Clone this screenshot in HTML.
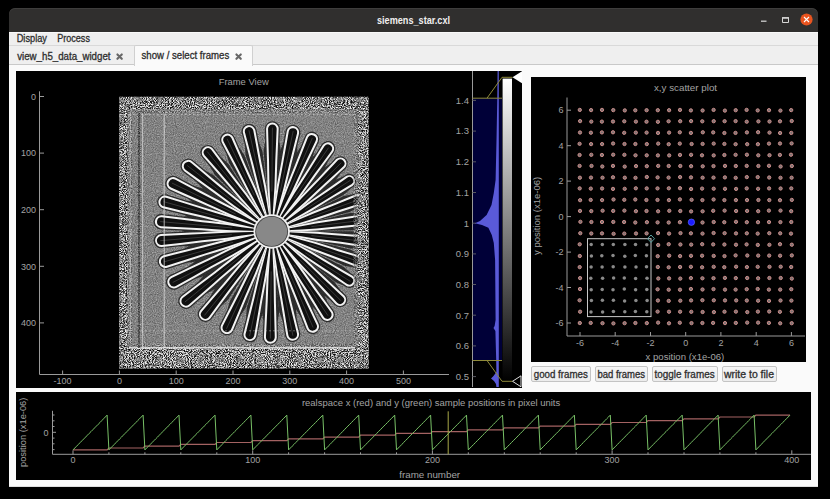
<!DOCTYPE html>
<html><head><meta charset="utf-8"><style>
html,body{margin:0;padding:0}
body{width:830px;height:499px;background:#000;position:relative;overflow:hidden;font-family:"Liberation Sans",sans-serif}
.a{position:absolute;white-space:nowrap}
#win{position:absolute;left:9px;top:8px;width:809px;height:479px;background:#302f2e;border-radius:6px 6px 0 0;overflow:hidden}
#title{position:absolute;left:0;top:0;width:809px;height:24px;background:#302f2e;border-radius:6px 6px 0 0;box-shadow:inset 0 1px 0 #3e3d3c}
#menu{position:absolute;left:0;top:24px;width:809px;height:14px;background:#efefef;box-shadow:inset 0 1px 0 #f9f9f9}
#tabbar{position:absolute;left:0;top:37px;width:809px;height:18px;background:#efefef;border-top:1px solid #d9d9d9;border-bottom:1px solid #c9c9c9}
.btn{position:absolute;top:366px;height:14px;border:1px solid #c4c4c4;border-radius:2px;background:linear-gradient(#f6f6f6,#ececec);font-size:9.6px;color:#303030;line-height:14px;text-align:center}
</style></head><body>
<div id="win">
<div id="title"></div><div style="position:absolute;left:0;top:24px;width:809px;height:454px;background:#fafafa;border-bottom:1px solid #dedede"></div>
<div id="menu"></div>
<div id="tabbar"></div>
</div>

<svg class="a" style="left:750px;top:8px" width="68" height="24"><path d="M11 13.2H16.5" stroke="#cfcfcf" stroke-width="1.3"/><path d="M32.5 10H38.5V14.5H32.5Z" fill="none" stroke="#d6d6d6" stroke-width="1"/><path d="M32 9.8H39" stroke="#d6d6d6" stroke-width="1.4"/><circle cx="56.5" cy="11.5" r="6.1" fill="#e9541f"/><path d="M54 9L59 14M59 9L54 14" stroke="#fff" stroke-width="1.1"/></svg>
<div class="a" style="left:134px;top:45px;width:117px;height:20px;background:#fafafa;border:1px solid #d0d0d0;border-bottom:none;border-radius:2px 2px 0 0"></div>
<svg class="a" style="left:114px;top:51px" width="12" height="12"><path d="M3.4 3.4L7.8 7.8M7.8 3.4L3.4 7.8" stroke="#686868" stroke-width="2.1" stroke-linecap="round"/></svg>
<svg class="a" style="left:232.5px;top:50.5px" width="12" height="12"><path d="M3.4 3.4L7.8 7.8M7.8 3.4L3.4 7.8" stroke="#686868" stroke-width="2.1" stroke-linecap="round"/></svg>
<div class="btn" style="left:531.0px;width:57.5px"></div>
<div class="btn" style="left:594.5px;width:51.0px"></div>
<div class="btn" style="left:652.0px;width:63.5px"></div>
<div class="btn" style="left:721.5px;width:53.0px"></div>
<svg class="a" style="left:0;top:0" width="830" height="499" font-family="Liberation Sans, sans-serif">
<text x="377.00" y="23.60" font-size="11.00" fill="#f0f0f0" textLength="73.00" lengthAdjust="spacingAndGlyphs" font-weight="bold">siemens_star.cxl</text>
<text x="16.70" y="41.50" font-size="10.00" fill="#2e2e2e" textLength="30.30" lengthAdjust="spacingAndGlyphs" stroke="#2e2e2e" stroke-width="0.3">Display</text>
<text x="57.30" y="41.50" font-size="10.00" fill="#2e2e2e" textLength="32.60" lengthAdjust="spacingAndGlyphs" stroke="#2e2e2e" stroke-width="0.3">Process</text>
<text x="17.20" y="59.60" font-size="10.00" fill="#2e2e2e" textLength="93.30" lengthAdjust="spacingAndGlyphs" stroke="#2e2e2e" stroke-width="0.3">view_h5_data_widget</text>
<text x="141.50" y="59.40" font-size="10.00" fill="#2e2e2e" textLength="87.70" lengthAdjust="spacingAndGlyphs" stroke="#2e2e2e" stroke-width="0.3">show / select frames</text>
<text x="533.80" y="377.60" font-size="10.00" fill="#2e2e2e" textLength="54.00" lengthAdjust="spacingAndGlyphs" stroke="#2e2e2e" stroke-width="0.3">good frames</text>
<text x="597.40" y="377.60" font-size="10.00" fill="#2e2e2e" textLength="47.60" lengthAdjust="spacingAndGlyphs" stroke="#2e2e2e" stroke-width="0.3">bad frames</text>
<text x="654.60" y="377.60" font-size="10.00" fill="#2e2e2e" textLength="60.00" lengthAdjust="spacingAndGlyphs" stroke="#2e2e2e" stroke-width="0.3">toggle frames</text>
<text x="724.00" y="377.60" font-size="10.00" fill="#2e2e2e" textLength="50.00" lengthAdjust="spacingAndGlyphs" stroke="#2e2e2e" stroke-width="0.3">write to file</text>
<rect x="16" y="71" width="506" height="317" fill="#000"/>
<text x="218.70" y="85.20" font-size="9.30" fill="#a3a3a3" textLength="50.00" lengthAdjust="spacingAndGlyphs">Frame View</text>
<path d="M39.5 91.3V374.5H449" stroke="#9a9a9a" fill="none" stroke-width="1"/>
<path d="M39.5 96.5H44" stroke="#9a9a9a"/>
<text x="36" y="99.7" font-size="9" fill="#a3a3a3" text-anchor="end">0</text>
<path d="M39.5 153.1H44" stroke="#9a9a9a"/>
<text x="36" y="156.3" font-size="9" fill="#a3a3a3" text-anchor="end">100</text>
<path d="M39.5 209.7H44" stroke="#9a9a9a"/>
<text x="36" y="212.9" font-size="9" fill="#a3a3a3" text-anchor="end">200</text>
<path d="M39.5 266.3H44" stroke="#9a9a9a"/>
<text x="36" y="269.5" font-size="9" fill="#a3a3a3" text-anchor="end">300</text>
<path d="M39.5 322.9H44" stroke="#9a9a9a"/>
<text x="36" y="326.1" font-size="9" fill="#a3a3a3" text-anchor="end">400</text>
<path d="M62.6 374.5V370.5" stroke="#9a9a9a"/>
<text x="62.6" y="384" font-size="9" fill="#a3a3a3" text-anchor="middle">-100</text>
<path d="M119.4 374.5V370.5" stroke="#9a9a9a"/>
<text x="119.4" y="384" font-size="9" fill="#a3a3a3" text-anchor="middle">0</text>
<path d="M176.2 374.5V370.5" stroke="#9a9a9a"/>
<text x="176.2" y="384" font-size="9" fill="#a3a3a3" text-anchor="middle">100</text>
<path d="M233.0 374.5V370.5" stroke="#9a9a9a"/>
<text x="233.0" y="384" font-size="9" fill="#a3a3a3" text-anchor="middle">200</text>
<path d="M289.8 374.5V370.5" stroke="#9a9a9a"/>
<text x="289.8" y="384" font-size="9" fill="#a3a3a3" text-anchor="middle">300</text>
<path d="M346.6 374.5V370.5" stroke="#9a9a9a"/>
<text x="346.6" y="384" font-size="9" fill="#a3a3a3" text-anchor="middle">400</text>
<path d="M403.4 374.5V370.5" stroke="#9a9a9a"/>
<text x="403.4" y="384" font-size="9" fill="#a3a3a3" text-anchor="middle">500</text>
<defs><clipPath id="imc"><rect x="119.2" y="96.7" width="249.4" height="271.8"/></clipPath>
<filter id="nz" x="0" y="0" width="830" height="499" filterUnits="userSpaceOnUse" color-interpolation-filters="sRGB"><feTurbulence type="fractalNoise" baseFrequency="0.95" numOctaves="3" seed="11"/><feComponentTransfer><feFuncR type="linear" slope="3.6" intercept="-1.3"/><feFuncG type="linear" slope="3.6" intercept="-1.3"/><feFuncB type="linear" slope="3.6" intercept="-1.3"/><feFuncA type="linear" slope="0" intercept="1"/></feComponentTransfer><feColorMatrix type="saturate" values="0"/><feGaussianBlur stdDeviation="0.3"/><feComposite in2="SourceGraphic" operator="in"/></filter>
<filter id="nz2" x="0" y="0" width="830" height="499" filterUnits="userSpaceOnUse" color-interpolation-filters="sRGB"><feTurbulence type="fractalNoise" baseFrequency="0.9" numOctaves="2" seed="9"/><feComponentTransfer><feFuncR type="linear" slope="0.6" intercept="0.21"/><feFuncG type="linear" slope="0.6" intercept="0.21"/><feFuncB type="linear" slope="0.6" intercept="0.21"/><feFuncA type="linear" slope="0" intercept="1"/></feComponentTransfer><feColorMatrix type="saturate" values="0"/><feComposite in2="SourceGraphic" operator="in"/></filter></defs>
<g clip-path="url(#imc)">
<rect x="119.2" y="96.7" width="249.4" height="271.8" fill="#fff" filter="url(#nz2)"/>
<g opacity="0.85"><path d="M273.58 216.46 L274.13 211.47 L275.25 201.47 L276.93 186.49 L278.60 171.50 L279.72 161.50 L280.84 151.51 L279.42 141.50 L279.97 128.85 A7.60 7.60 0 0 0 264.77 128.75 L264.77 128.75 L265.15 141.40 L263.58 151.39 L264.56 161.40 L265.54 171.41 L267.00 186.42 L268.47 201.43 L269.45 211.43 L269.93 216.44Z" fill="#1e1e1e"/><path d="M276.58 217.17 L278.14 212.39 L281.26 202.83 L285.94 188.49 L290.62 174.16 L293.74 164.60 L296.87 155.04 L297.51 144.95 L300.31 133.89 A7.56 7.56 0 0 0 285.53 130.72 L285.53 130.72 L283.55 141.96 L279.99 151.42 L278.92 161.42 L277.85 171.41 L276.24 186.41 L274.63 201.41 L273.55 211.40 L273.02 216.40Z" fill="#1e1e1e"/><path d="M279.31 218.42 L281.78 214.05 L286.73 205.30 L294.16 192.17 L301.59 179.04 L306.54 170.29 L311.49 161.54 L314.11 151.78 L318.73 142.16 A7.53 7.53 0 0 0 304.92 136.15 L304.92 136.15 L301.02 146.08 L295.67 154.65 L292.64 164.24 L289.61 173.83 L285.06 188.21 L280.51 202.59 L277.48 212.18 L275.97 216.97Z" fill="#1e1e1e"/><path d="M281.58 220.06 L284.83 216.22 L291.31 208.54 L301.04 197.01 L310.77 185.49 L317.25 177.80 L323.74 170.12 L328.12 161.01 L334.15 152.80 A7.51 7.51 0 0 0 321.73 144.35 L321.73 144.35 L316.31 152.99 L309.46 160.42 L304.71 169.28 L299.96 178.15 L292.83 191.44 L285.70 204.73 L280.95 213.59 L278.57 218.02Z" fill="#1e1e1e"/><path d="M283.60 222.21 L287.53 219.07 L295.38 212.78 L307.16 203.36 L318.93 193.94 L326.78 187.66 L334.64 181.38 L340.70 173.29 L345.70 168.71 A7.39 7.39 0 0 0 335.32 158.20 L335.32 158.20 L330.67 163.13 L322.51 169.10 L316.13 176.87 L309.75 184.64 L300.18 196.30 L290.61 207.96 L284.23 215.73 L281.04 219.61Z" fill="#1e1e1e"/><path d="M285.22 224.80 L289.70 222.52 L298.65 217.94 L312.08 211.09 L325.52 204.23 L334.47 199.66 L343.43 195.08 L351.00 188.38 L353.22 187.05 A7.23 7.23 0 0 0 345.34 174.93 L345.34 174.93 L343.22 176.42 L334.02 180.62 L326.21 186.94 L318.40 193.27 L306.67 202.76 L294.95 212.26 L287.14 218.58 L283.23 221.75Z" fill="#1e1e1e"/><path d="M286.36 228.02 L291.24 226.79 L300.99 224.35 L315.62 220.68 L330.25 217.01 L340.00 214.56 L349.76 212.11 L358.64 207.28 L360.82 206.58 A7.22 7.22 0 0 0 355.86 193.01 L355.86 193.01 L353.74 193.88 L343.84 195.91 L334.80 200.32 L325.77 204.73 L312.22 211.35 L298.67 217.97 L289.63 222.39 L285.12 224.59Z" fill="#1e1e1e"/><path d="M286.76 231.42 L291.79 231.33 L301.84 231.15 L316.92 230.88 L332.00 230.60 L342.05 230.42 L352.10 230.24 L361.85 227.53 L364.40 227.31 A7.23 7.23 0 0 0 362.63 212.96 L362.63 212.96 L360.10 213.37 L350.00 213.11 L340.20 215.37 L330.40 217.63 L315.71 221.03 L301.01 224.42 L291.21 226.68 L286.32 227.81Z" fill="#1e1e1e"/><path d="M286.38 234.83 L291.29 235.88 L301.13 237.97 L315.88 241.10 L330.63 244.24 L340.47 246.33 L350.30 248.42 L360.41 247.99 L363.65 248.45 A7.26 7.26 0 0 0 365.17 234.01 L365.17 234.01 L361.90 233.79 L352.11 231.26 L342.06 231.25 L332.00 231.25 L316.92 231.23 L301.84 231.22 L291.79 231.22 L286.76 231.21Z" fill="#1e1e1e"/><path d="M285.23 238.07 L289.79 240.20 L298.90 244.45 L312.56 250.84 L326.23 257.22 L335.34 261.47 L344.45 265.73 L354.39 267.59 L358.51 269.18 A7.30 7.30 0 0 0 363.28 255.38 L363.28 255.38 L359.05 254.09 L350.08 249.42 L340.29 247.14 L330.49 244.87 L315.80 241.45 L301.11 238.04 L291.32 235.77 L286.42 234.63Z" fill="#1e1e1e"/><path d="M283.34 241.02 L287.28 244.14 L295.16 250.39 L306.99 259.75 L318.81 269.11 L326.70 275.35 L334.58 281.59 L343.82 285.69 L345.49 286.84 A7.21 7.21 0 0 0 353.22 274.66 L353.22 274.66 L351.47 273.64 L343.82 267.02 L334.82 262.55 L325.81 258.08 L312.31 251.37 L298.80 244.66 L289.79 240.19 L285.29 237.95Z" fill="#1e1e1e"/><path d="M280.97 243.34 L284.13 247.25 L290.46 255.06 L299.96 266.78 L309.46 278.50 L315.79 286.31 L322.12 294.12 L330.24 300.14 L334.81 305.05 A7.38 7.38 0 0 0 345.25 294.61 L345.25 294.61 L340.34 290.04 L334.32 281.92 L326.51 275.59 L318.70 269.26 L306.98 259.76 L295.26 250.26 L287.45 243.93 L283.54 240.77Z" fill="#1e1e1e"/><path d="M278.48 244.93 L280.82 249.38 L285.52 258.27 L292.55 271.61 L299.59 284.95 L304.28 293.84 L308.97 302.74 L315.77 310.22 L321.12 318.89 A7.51 7.51 0 0 0 333.61 310.53 L333.61 310.53 L327.63 302.28 L323.31 293.14 L316.88 285.41 L310.45 277.68 L300.80 266.09 L291.15 254.50 L284.72 246.77 L281.51 242.90Z" fill="#1e1e1e"/><path d="M275.92 245.94 L277.42 250.74 L280.42 260.34 L284.92 274.73 L289.42 289.13 L292.42 298.73 L295.42 308.32 L300.75 316.91 L305.63 329.47 A7.63 7.63 0 0 0 319.64 323.42 L319.64 323.42 L313.86 311.26 L311.26 301.49 L306.34 292.72 L301.42 283.95 L294.03 270.80 L286.65 257.65 L281.73 248.88 L279.26 244.50Z" fill="#1e1e1e"/><path d="M272.86 246.51 L273.35 251.52 L274.32 261.52 L275.78 276.53 L277.24 291.55 L278.21 301.55 L279.18 311.56 L282.64 321.06 L285.12 336.02 A7.70 7.70 0 0 0 300.20 332.95 L300.20 332.95 L296.63 318.21 L296.09 308.11 L293.06 298.52 L290.04 288.93 L285.50 274.55 L280.97 260.17 L277.94 250.58 L276.43 245.78Z" fill="#1e1e1e"/><path d="M269.65 246.43 L269.06 251.42 L267.89 261.41 L266.14 276.39 L264.38 291.37 L263.21 301.35 L262.04 311.34 L263.41 321.36 L262.63 337.21 A7.72 7.72 0 0 0 278.07 337.40 L278.07 337.40 L277.68 321.53 L279.30 311.55 L278.37 301.54 L277.45 291.53 L276.06 276.51 L274.67 261.49 L273.75 251.48 L273.29 246.47Z" fill="#1e1e1e"/><path d="M266.78 245.75 L265.23 250.54 L262.15 260.11 L257.52 274.46 L252.89 288.82 L249.81 298.39 L246.72 307.95 L246.12 318.05 L242.32 333.30 A7.72 7.72 0 0 0 257.42 336.48 L257.42 336.48 L260.09 320.99 L263.61 311.51 L264.64 301.51 L265.68 291.51 L267.23 276.51 L268.79 261.50 L269.82 251.50 L270.34 246.50Z" fill="#1e1e1e"/><path d="M263.68 244.29 L261.10 248.60 L255.94 257.23 L248.20 270.18 L240.46 283.12 L235.30 291.75 L230.14 300.38 L227.28 310.08 L219.96 324.44 A7.73 7.73 0 0 0 233.98 330.95 L233.98 330.95 L240.22 316.09 L245.79 307.64 L249.05 298.13 L252.31 288.62 L257.20 274.36 L262.09 260.09 L265.35 250.58 L266.99 245.82Z" fill="#1e1e1e"/><path d="M260.85 242.02 L257.32 245.60 L250.25 252.75 L239.65 263.48 L229.05 274.21 L221.98 281.36 L214.92 288.51 L209.83 297.25 L199.19 309.59 A7.74 7.74 0 0 0 211.26 319.26 L211.26 319.26 L220.97 306.17 L228.39 299.29 L233.82 290.83 L239.25 282.37 L247.40 269.68 L255.55 256.99 L260.98 248.53 L263.70 244.30Z" fill="#1e1e1e"/><path d="M258.87 239.50 L254.66 242.25 L246.24 247.75 L233.61 256.00 L220.98 264.25 L212.57 269.75 L204.15 275.25 L197.33 282.71 L180.94 295.20 A7.80 7.80 0 0 0 190.78 307.30 L190.78 307.30 L206.34 293.79 L215.04 288.63 L222.13 281.51 L229.23 274.38 L239.88 263.70 L250.52 253.01 L257.62 245.89 L261.16 242.33Z" fill="#1e1e1e"/><path d="M257.49 236.71 L252.80 238.54 L243.43 242.19 L229.38 247.67 L215.33 253.16 L205.97 256.81 L196.60 260.47 L188.40 266.38 L170.16 275.04 A7.80 7.80 0 0 0 177.31 288.91 L177.31 288.91 L194.94 279.06 L204.51 275.80 L212.92 270.28 L221.33 264.77 L233.94 256.49 L246.55 248.22 L254.95 242.70 L259.15 239.95Z" fill="#1e1e1e"/><path d="M256.72 233.77 L251.77 234.63 L241.86 236.34 L226.99 238.90 L212.13 241.46 L202.22 243.17 L192.31 244.88 L183.10 249.03 L163.22 253.95 A7.80 7.80 0 0 0 167.46 268.97 L167.46 268.97 L186.97 262.77 L197.00 261.49 L206.34 257.76 L215.68 254.04 L229.69 248.45 L243.70 242.86 L253.04 239.14 L257.71 237.28Z" fill="#1e1e1e"/><path d="M256.55 230.87 L251.52 230.76 L241.47 230.54 L226.39 230.21 L211.32 229.88 L201.26 229.66 L191.21 229.43 L181.37 231.74 L160.74 232.78 A7.80 7.80 0 0 0 162.03 248.33 L162.03 248.33 L182.54 245.97 L192.63 246.63 L202.51 244.76 L212.39 242.90 L227.21 240.10 L242.03 237.30 L251.91 235.43 L256.85 234.50Z" fill="#1e1e1e"/><path d="M256.87 228.31 L251.94 227.35 L242.07 225.42 L227.26 222.53 L212.46 219.64 L202.59 217.72 L192.72 215.79 L182.63 216.39 L162.07 213.90 A7.80 7.80 0 0 0 160.69 229.44 L160.69 229.44 L181.37 230.61 L191.20 232.98 L201.25 232.82 L211.31 232.66 L226.39 232.42 L241.47 232.18 L251.52 232.02 L256.55 231.94Z" fill="#1e1e1e"/><path d="M257.67 225.71 L252.99 223.88 L243.63 220.21 L229.59 214.71 L215.54 209.21 L206.18 205.54 L196.82 201.88 L186.78 200.66 L166.92 194.50 A7.80 7.80 0 0 0 162.78 209.54 L162.78 209.54 L182.99 214.42 L192.23 218.51 L202.15 220.16 L212.07 221.81 L226.95 224.28 L241.83 226.75 L251.75 228.40 L256.71 229.22Z" fill="#1e1e1e"/><path d="M258.95 223.26 L254.68 220.60 L246.15 215.29 L233.34 207.33 L220.53 199.36 L211.99 194.05 L203.45 188.74 L193.81 185.72 L176.39 176.52 A7.80 7.80 0 0 0 169.57 190.55 L169.57 190.55 L187.57 198.56 L195.92 204.27 L205.37 207.69 L214.82 211.12 L229.00 216.26 L243.18 221.40 L252.63 224.82 L257.36 226.54Z" fill="#1e1e1e"/><path d="M260.95 220.78 L257.33 217.29 L250.09 210.31 L239.24 199.84 L228.38 189.37 L221.15 182.39 L213.91 175.41 L205.11 170.43 L192.96 160.20 A7.72 7.72 0 0 0 183.46 172.37 L183.46 172.37 L196.33 181.68 L203.29 189.01 L211.82 194.34 L220.34 199.67 L233.13 207.66 L245.92 215.66 L254.44 220.99 L258.71 223.65Z" fill="#1e1e1e"/><path d="M263.65 218.63 L260.92 214.41 L255.45 205.97 L247.26 193.31 L239.06 180.65 L233.60 172.21 L228.14 163.77 L220.70 156.92 L213.82 147.72 A7.56 7.56 0 0 0 202.05 157.22 L202.05 157.22 L209.59 165.88 L214.71 174.60 L221.80 181.73 L228.89 188.85 L239.53 199.54 L250.17 210.23 L257.27 217.36 L260.81 220.92Z" fill="#1e1e1e"/><path d="M266.78 217.14 L265.09 212.41 L261.69 202.95 L256.60 188.75 L251.51 174.55 L248.12 165.09 L244.72 155.63 L239.04 147.26 L234.34 136.50 A7.57 7.57 0 0 0 220.70 143.07 L220.70 143.07 L226.18 153.45 L229.18 163.11 L234.46 171.67 L239.74 180.22 L247.66 193.06 L255.58 205.89 L260.86 214.45 L263.50 218.72Z" fill="#1e1e1e"/><path d="M270.13 216.42 L269.54 211.42 L268.37 201.44 L266.61 186.46 L264.84 171.48 L263.67 161.49 L262.49 151.51 L258.84 142.08 L256.54 129.73 A7.60 7.60 0 0 0 241.71 133.07 L241.71 133.07 L244.92 145.22 L245.66 155.30 L248.88 164.82 L252.10 174.35 L256.92 188.64 L261.75 202.93 L264.97 212.45 L266.58 217.22Z" fill="#1e1e1e"/></g>
<g><path d="M273.58 216.46 L274.13 211.47 L275.25 201.47 L276.47 186.48 L276.93 171.49 L277.24 161.49 L277.68 151.49 L278.12 141.49 L278.67 128.84 A6.30 6.30 0 0 0 266.07 128.76 L266.07 128.76 L266.45 141.41 L266.74 151.41 L267.04 161.42 L267.21 171.42 L267.47 186.42 L268.47 201.43 L269.45 211.43 L269.93 216.44Z" fill="#f2f2f2"/><path d="M276.58 217.17 L278.14 212.39 L281.26 202.83 L285.49 188.39 L288.99 173.80 L291.32 164.08 L293.78 154.38 L296.23 144.68 L299.04 133.62 A6.26 6.26 0 0 0 286.80 130.99 L286.80 130.99 L284.82 142.23 L283.08 152.08 L281.35 161.94 L279.48 171.77 L276.69 186.51 L274.63 201.41 L273.55 211.40 L273.02 216.40Z" fill="#f2f2f2"/><path d="M279.31 218.42 L281.78 214.05 L286.73 205.30 L293.74 191.98 L300.05 178.37 L304.26 169.30 L308.59 160.28 L312.92 151.26 L317.54 141.64 A6.23 6.23 0 0 0 306.11 136.66 L306.11 136.66 L302.22 146.60 L298.56 155.91 L294.91 165.23 L291.14 174.50 L285.48 188.39 L280.51 202.59 L277.48 212.18 L275.97 216.97Z" fill="#f2f2f2"/><path d="M281.58 220.06 L284.83 216.22 L291.31 208.54 L300.66 196.75 L309.38 184.55 L315.20 176.41 L321.12 168.34 L327.05 160.28 L333.08 152.06 A6.21 6.21 0 0 0 322.80 145.08 L322.80 145.08 L317.39 153.72 L312.08 162.20 L306.76 170.68 L301.34 179.09 L293.21 191.70 L285.70 204.73 L280.95 213.59 L278.57 218.02Z" fill="#f2f2f2"/><path d="M283.60 222.21 L287.53 219.07 L295.38 212.78 L306.83 203.03 L317.76 192.75 L325.04 185.89 L332.42 179.13 L339.79 172.37 L344.79 167.78 A6.09 6.09 0 0 0 336.23 159.12 L336.23 159.12 L331.59 164.06 L324.73 171.35 L317.87 178.64 L310.93 185.83 L300.51 196.63 L290.61 207.96 L284.23 215.73 L281.04 219.61Z" fill="#f2f2f2"/><path d="M285.22 224.80 L289.70 222.52 L298.65 217.94 L311.83 210.70 L324.60 202.82 L333.12 197.58 L341.70 192.43 L350.29 187.29 L352.51 185.96 A5.93 5.93 0 0 0 346.05 176.02 L346.05 176.02 L343.93 177.51 L335.74 183.26 L327.56 189.02 L319.31 194.67 L306.93 203.15 L294.95 212.26 L287.14 218.58 L283.23 221.75Z" fill="#f2f2f2"/><path d="M286.36 228.02 L291.24 226.79 L300.99 224.35 L315.46 220.24 L329.68 215.43 L339.15 212.23 L348.67 209.15 L358.19 206.06 L360.37 205.36 A5.92 5.92 0 0 0 356.31 194.23 L356.31 194.23 L354.19 195.10 L344.92 198.87 L335.65 202.65 L326.34 206.30 L312.38 211.79 L298.67 217.97 L289.63 222.39 L285.12 224.59Z" fill="#f2f2f2"/><path d="M286.76 231.42 L291.79 231.33 L301.84 231.15 L316.86 230.42 L331.79 228.94 L341.75 227.96 L351.72 227.10 L361.69 226.24 L364.24 226.02 A5.93 5.93 0 0 0 362.79 214.25 L362.79 214.25 L360.26 214.66 L350.38 216.25 L340.50 217.83 L330.61 219.29 L315.76 221.48 L301.01 224.42 L291.21 226.68 L286.32 227.81Z" fill="#f2f2f2"/><path d="M286.38 234.83 L291.29 235.88 L301.13 237.97 L315.93 240.64 L330.81 242.58 L340.73 243.86 L350.64 245.28 L360.54 246.69 L363.79 247.16 A5.96 5.96 0 0 0 365.04 235.31 L365.04 235.31 L361.77 235.08 L351.78 234.40 L341.80 233.72 L331.83 232.91 L316.87 231.69 L301.84 231.22 L291.79 231.22 L286.76 231.21Z" fill="#f2f2f2"/><path d="M285.23 238.07 L289.79 240.20 L298.90 244.45 L312.71 250.40 L326.77 255.64 L336.15 259.13 L345.48 262.74 L354.81 266.36 L358.94 267.95 A6.00 6.00 0 0 0 362.85 256.61 L362.85 256.61 L358.62 255.32 L349.05 252.41 L339.48 249.49 L329.95 246.45 L315.65 241.89 L301.11 238.04 L291.32 235.77 L286.42 234.63Z" fill="#f2f2f2"/><path d="M283.34 241.02 L287.28 244.14 L295.16 250.39 L307.24 259.36 L319.71 267.70 L328.02 273.26 L336.27 278.93 L344.52 284.59 L346.19 285.74 A5.91 5.91 0 0 0 352.52 275.76 L352.52 275.76 L350.77 274.74 L342.13 269.69 L333.49 264.64 L324.92 259.49 L312.06 251.76 L298.80 244.66 L289.79 240.19 L285.29 237.95Z" fill="#f2f2f2"/><path d="M280.97 243.34 L284.13 247.25 L290.46 255.06 L300.29 266.45 L310.64 277.31 L317.54 284.55 L324.35 291.89 L331.16 299.22 L335.73 304.13 A6.08 6.08 0 0 0 344.33 295.53 L344.33 295.53 L339.42 290.96 L332.09 284.15 L324.75 277.34 L317.51 270.44 L306.65 260.09 L295.26 250.26 L287.45 243.93 L283.54 240.77Z" fill="#f2f2f2"/><path d="M278.48 244.93 L280.82 249.38 L285.52 258.27 L292.94 271.35 L300.98 284.02 L306.34 292.46 L311.60 300.98 L316.85 309.49 L322.20 318.16 A6.21 6.21 0 0 0 332.53 311.25 L332.53 311.25 L326.55 303.00 L320.69 294.90 L314.82 286.79 L309.06 278.61 L300.42 266.35 L291.15 254.50 L284.72 246.77 L281.51 242.90Z" fill="#f2f2f2"/><path d="M275.92 245.94 L277.42 250.74 L280.42 260.34 L285.35 274.55 L290.96 288.47 L294.70 297.74 L298.32 307.07 L301.95 316.40 L306.82 328.95 A6.33 6.33 0 0 0 318.45 323.93 L318.45 323.93 L312.66 311.77 L308.36 302.74 L304.06 293.70 L299.88 284.62 L293.61 270.99 L286.65 257.65 L281.73 248.88 L279.26 244.50Z" fill="#f2f2f2"/><path d="M272.86 246.51 L273.35 251.52 L274.32 261.52 L276.23 276.44 L278.88 291.21 L280.64 301.06 L282.28 310.93 L283.91 320.80 L286.39 335.76 A6.40 6.40 0 0 0 298.93 333.21 L298.93 333.21 L295.35 318.47 L292.99 308.74 L290.63 299.02 L288.40 289.27 L285.05 274.64 L280.97 260.17 L277.94 250.58 L276.43 245.78Z" fill="#f2f2f2"/><path d="M269.65 246.43 L269.06 251.42 L267.89 261.41 L266.60 276.39 L266.05 291.39 L265.69 301.38 L265.20 311.38 L264.71 321.37 L263.93 337.22 A6.42 6.42 0 0 0 276.77 337.38 L276.77 337.38 L276.38 321.51 L276.14 311.51 L275.89 301.51 L275.77 291.51 L275.60 276.50 L274.67 261.49 L273.75 251.48 L273.29 246.47Z" fill="#f2f2f2"/><path d="M266.78 245.75 L265.23 250.54 L262.15 260.11 L257.97 274.56 L254.53 289.16 L252.23 298.90 L249.81 308.61 L247.39 318.32 L243.59 333.57 A6.42 6.42 0 0 0 256.14 336.21 L256.14 336.21 L258.81 320.72 L260.51 310.86 L262.21 301.00 L264.04 291.16 L266.78 276.41 L268.79 261.50 L269.82 251.50 L270.34 246.50Z" fill="#f2f2f2"/><path d="M263.68 244.29 L261.10 248.60 L255.94 257.23 L248.62 270.37 L241.98 283.82 L237.55 292.79 L233.00 301.71 L228.46 310.62 L221.14 324.98 A6.43 6.43 0 0 0 232.80 330.40 L232.80 330.40 L239.05 315.54 L242.92 306.31 L246.80 297.09 L250.79 287.92 L256.78 274.16 L262.09 260.09 L265.35 250.58 L266.99 245.82Z" fill="#f2f2f2"/><path d="M260.85 242.02 L257.32 245.60 L250.25 252.75 L240.01 263.77 L230.36 275.25 L223.92 282.91 L217.38 290.48 L210.85 298.06 L200.20 310.40 A6.44 6.44 0 0 0 210.25 318.44 L210.25 318.44 L219.96 305.36 L225.92 297.32 L231.88 289.28 L237.95 281.33 L247.04 269.39 L255.55 256.99 L260.98 248.53 L263.70 244.30Z" fill="#f2f2f2"/><path d="M258.87 239.50 L254.66 242.25 L246.24 247.75 L233.90 256.36 L222.04 265.55 L214.13 271.67 L206.14 277.70 L198.15 283.72 L181.76 296.21 A6.50 6.50 0 0 0 189.96 306.29 L189.96 306.29 L205.52 292.78 L213.05 286.18 L220.57 279.58 L228.18 273.09 L239.58 263.34 L250.52 253.01 L257.62 245.89 L261.16 242.33Z" fill="#f2f2f2"/><path d="M257.49 236.71 L252.80 238.54 L243.43 242.19 L229.60 248.09 L216.10 254.64 L207.10 259.02 L198.05 263.27 L188.99 267.53 L170.75 276.20 A6.50 6.50 0 0 0 176.71 287.75 L176.71 287.75 L194.35 277.91 L203.06 272.99 L211.78 268.08 L220.56 263.28 L233.72 256.08 L246.55 248.22 L254.95 242.70 L259.15 239.95Z" fill="#f2f2f2"/><path d="M256.72 233.77 L251.77 234.63 L241.86 236.34 L227.12 239.34 L212.59 243.07 L202.90 245.56 L193.17 247.92 L183.45 250.28 L163.58 255.20 A6.50 6.50 0 0 0 167.11 267.71 L167.11 267.71 L186.62 261.52 L196.14 258.45 L205.67 255.37 L215.23 252.43 L229.56 248.01 L243.70 242.86 L253.04 239.14 L257.71 237.28Z" fill="#f2f2f2"/><path d="M256.55 230.87 L251.52 230.76 L241.47 230.54 L226.43 230.67 L211.45 231.54 L201.47 232.13 L191.47 232.58 L181.47 233.04 L160.85 234.08 A6.50 6.50 0 0 0 161.92 247.03 L161.92 247.03 L182.44 244.67 L192.37 243.48 L202.31 242.29 L212.25 241.23 L227.17 239.64 L242.03 237.30 L251.91 235.43 L256.85 234.50Z" fill="#f2f2f2"/><path d="M256.87 228.31 L251.94 227.35 L242.07 225.42 L227.22 222.99 L212.31 221.31 L202.37 220.19 L192.45 218.94 L182.52 217.69 L161.96 215.20 A6.50 6.50 0 0 0 160.81 228.15 L160.81 228.15 L181.49 229.31 L191.48 229.83 L201.47 230.35 L211.46 230.99 L226.43 231.96 L241.47 232.18 L251.52 232.02 L256.55 231.94Z" fill="#f2f2f2"/><path d="M257.67 225.71 L252.99 223.88 L243.63 220.21 L229.46 215.16 L215.10 210.82 L205.52 207.93 L195.98 204.92 L186.44 201.91 L166.58 195.75 A6.50 6.50 0 0 0 163.12 208.28 L163.12 208.28 L183.33 213.16 L193.07 215.47 L202.81 217.77 L212.52 220.19 L227.07 223.83 L241.83 226.75 L251.75 228.40 L256.71 229.22Z" fill="#f2f2f2"/><path d="M258.95 223.26 L254.68 220.60 L246.15 215.29 L233.14 207.75 L219.80 200.87 L210.91 196.28 L202.07 191.59 L193.24 186.89 L175.82 177.69 A6.50 6.50 0 0 0 170.14 189.38 L170.14 189.38 L188.14 197.39 L197.30 201.42 L206.45 205.46 L215.55 209.61 L229.20 215.84 L243.18 221.40 L252.63 224.82 L257.36 226.54Z" fill="#f2f2f2"/><path d="M260.95 220.78 L257.33 217.29 L250.09 210.31 L238.95 200.21 L227.35 190.69 L219.62 184.34 L211.97 177.90 L204.31 171.45 L192.16 161.22 A6.42 6.42 0 0 0 184.26 171.35 L184.26 171.35 L197.13 180.65 L205.23 186.52 L213.34 192.38 L221.37 198.35 L233.41 207.30 L245.92 215.66 L254.44 220.99 L258.71 223.65Z" fill="#f2f2f2"/><path d="M263.65 218.63 L260.92 214.41 L255.45 205.97 L246.90 193.60 L237.76 181.70 L231.67 173.77 L225.68 165.75 L219.69 157.74 L212.81 148.54 A6.26 6.26 0 0 0 203.07 156.40 L203.07 156.40 L210.60 165.07 L217.16 172.62 L223.73 180.17 L230.20 187.80 L239.89 199.25 L250.17 210.23 L257.27 217.36 L260.81 220.92Z" fill="#f2f2f2"/><path d="M266.78 217.14 L265.09 212.41 L261.69 202.95 L256.19 188.95 L250.00 175.28 L245.88 166.17 L241.88 157.00 L237.87 147.83 L233.17 137.07 A6.27 6.27 0 0 0 221.87 142.50 L221.87 142.50 L227.35 152.89 L232.02 161.74 L236.69 170.59 L241.25 179.50 L248.08 192.86 L255.58 205.89 L260.86 214.45 L263.50 218.72Z" fill="#f2f2f2"/><path d="M270.13 216.42 L269.54 211.42 L268.37 201.44 L266.16 186.56 L263.21 171.85 L261.25 162.04 L259.41 152.20 L257.58 142.37 L255.27 130.01 A6.30 6.30 0 0 0 242.98 132.78 L242.98 132.78 L246.19 144.93 L248.74 154.61 L251.30 164.28 L253.73 173.98 L257.38 188.54 L261.75 202.93 L264.97 212.45 L266.58 217.22Z" fill="#f2f2f2"/></g>
<g><path d="M272.76 216.46 L272.89 211.46 L273.52 201.46 L274.47 186.47 L274.93 171.47 L275.24 161.47 L275.68 151.48 L276.12 141.48 L276.67 128.83 A4.30 4.30 0 0 0 268.07 128.77 L268.07 128.77 L268.44 141.43 L268.74 151.43 L269.04 161.43 L269.21 171.43 L269.47 186.43 L270.20 201.44 L270.69 211.44 L270.76 216.44Z" fill="#101010"/><path d="M275.77 216.99 L276.92 212.13 L279.57 202.47 L283.53 187.98 L287.03 173.38 L289.36 163.66 L291.82 153.96 L294.28 144.26 L297.08 133.20 A4.26 4.26 0 0 0 288.76 131.41 L288.76 131.41 L286.78 142.65 L285.04 152.50 L283.30 162.36 L281.44 172.18 L278.64 186.93 L276.32 201.77 L274.77 211.66 L273.82 216.57Z" fill="#101010"/><path d="M278.55 218.10 L280.64 213.55 L285.14 204.61 L291.90 191.19 L298.22 177.58 L302.43 168.50 L306.76 159.48 L311.09 150.46 L315.70 140.84 A4.23 4.23 0 0 0 307.95 137.46 L307.95 137.46 L304.05 147.40 L300.40 156.71 L296.74 166.03 L292.97 175.29 L287.32 189.19 L282.10 203.28 L278.62 212.67 L276.72 217.30Z" fill="#101010"/><path d="M280.91 219.60 L283.80 215.52 L289.88 207.57 L299.00 195.63 L307.73 183.42 L313.54 175.29 L319.47 167.22 L325.39 159.16 L331.42 150.94 A4.21 4.21 0 0 0 324.46 146.21 L324.46 146.21 L319.04 154.84 L313.73 163.32 L308.42 171.80 L303.00 180.21 L294.87 192.82 L287.13 205.70 L281.98 214.29 L279.25 218.48Z" fill="#101010"/><path d="M283.03 221.62 L286.65 218.18 L294.16 211.55 L305.43 201.61 L316.35 191.33 L323.64 184.47 L331.01 177.71 L338.39 170.94 L343.38 166.36 A4.09 4.09 0 0 0 337.64 160.54 L337.64 160.54 L332.99 165.48 L326.14 172.77 L319.28 180.06 L312.33 187.26 L301.91 198.05 L291.83 209.19 L285.11 216.61 L281.62 220.20Z" fill="#101010"/><path d="M284.77 224.11 L289.02 221.47 L297.71 216.49 L310.74 209.02 L323.51 201.15 L332.03 195.90 L340.61 190.76 L349.20 185.62 L351.42 184.29 A3.93 3.93 0 0 0 347.14 177.69 L347.14 177.69 L345.02 179.18 L336.83 184.94 L328.65 190.70 L320.40 196.35 L308.02 204.83 L295.90 213.71 L287.82 219.63 L283.68 222.44Z" fill="#101010"/><path d="M286.08 227.24 L290.81 225.62 L300.40 222.72 L314.78 218.36 L328.99 213.56 L338.47 210.35 L347.99 207.27 L357.51 204.18 L359.68 203.48 A3.92 3.92 0 0 0 356.99 196.11 L356.99 196.11 L354.87 196.98 L345.61 200.75 L336.34 204.53 L327.03 208.18 L313.06 213.67 L299.26 219.60 L290.06 223.56 L285.40 225.37Z" fill="#101010"/><path d="M286.66 230.61 L291.63 230.10 L301.63 229.43 L316.62 228.43 L331.55 226.96 L341.50 225.97 L351.47 225.12 L361.44 224.26 L363.99 224.04 A3.93 3.93 0 0 0 363.03 216.24 L363.03 216.24 L360.51 216.64 L350.63 218.23 L340.75 219.82 L330.85 221.28 L316.01 223.47 L301.22 226.14 L291.37 227.91 L286.42 228.62Z" fill="#101010"/><path d="M286.46 234.02 L291.42 234.64 L301.31 236.25 L316.14 238.66 L331.02 240.59 L340.94 241.87 L350.85 243.29 L360.75 244.70 L364.00 245.17 A3.96 3.96 0 0 0 364.83 237.30 L364.83 237.30 L361.56 237.07 L351.57 236.39 L341.59 235.71 L331.62 234.90 L316.66 233.68 L301.66 232.95 L291.66 232.45 L286.67 232.03Z" fill="#101010"/><path d="M285.50 237.29 L290.19 239.02 L299.46 242.82 L313.37 248.51 L327.43 253.75 L336.80 257.24 L346.13 260.85 L355.46 264.47 L359.59 266.06 A4.00 4.00 0 0 0 362.20 258.50 L362.20 258.50 L357.97 257.21 L348.40 254.30 L338.82 251.38 L329.29 248.34 L315.00 243.78 L300.55 239.68 L290.91 236.94 L286.15 235.40Z" fill="#101010"/><path d="M283.78 240.33 L287.95 243.09 L296.09 248.92 L308.31 257.67 L320.78 266.01 L329.10 271.57 L337.34 277.24 L345.59 282.91 L347.26 284.05 A3.91 3.91 0 0 0 351.45 277.45 L351.45 277.45 L349.70 276.43 L341.06 271.38 L332.42 266.33 L323.85 261.18 L310.99 253.45 L297.87 246.12 L289.13 241.24 L284.85 238.64Z" fill="#101010"/><path d="M281.55 242.76 L285.01 246.37 L291.69 253.84 L301.70 265.04 L312.05 275.90 L318.96 283.14 L325.77 290.47 L332.58 297.80 L337.14 302.72 A4.08 4.08 0 0 0 342.92 296.94 L342.92 296.94 L338.00 292.38 L330.67 285.57 L323.34 278.76 L316.10 271.85 L305.24 261.50 L294.04 251.49 L286.57 244.81 L282.96 241.35Z" fill="#101010"/><path d="M279.16 244.47 L281.86 248.68 L286.95 257.31 L294.60 270.24 L302.64 282.91 L308.00 291.35 L313.26 299.87 L318.51 308.38 L323.86 317.05 A4.21 4.21 0 0 0 330.86 312.37 L330.86 312.37 L324.89 304.11 L319.02 296.01 L313.16 287.90 L307.40 279.72 L298.75 267.46 L289.71 255.46 L283.69 247.46 L280.82 243.36Z" fill="#101010"/><path d="M276.67 245.62 L278.56 250.25 L282.01 259.65 L287.18 273.76 L292.79 287.67 L296.53 296.95 L300.16 306.28 L303.78 315.61 L308.66 328.16 A4.33 4.33 0 0 0 316.61 324.73 L316.61 324.73 L310.83 312.57 L306.53 303.53 L302.23 294.49 L298.05 285.41 L291.77 271.78 L285.06 258.34 L280.58 249.38 L278.51 244.83Z" fill="#101010"/><path d="M273.67 246.35 L274.57 251.27 L276.02 261.18 L278.19 276.04 L280.84 290.81 L282.60 300.66 L284.24 310.53 L285.87 320.40 L288.35 335.36 A4.40 4.40 0 0 0 296.97 333.61 L296.97 333.61 L293.39 318.87 L291.03 309.14 L288.67 299.42 L286.44 289.67 L283.09 275.04 L279.27 260.51 L276.72 250.83 L275.63 245.95Z" fill="#101010"/><path d="M270.47 246.44 L270.30 251.44 L269.62 261.43 L268.60 276.42 L268.05 291.41 L267.69 301.41 L267.20 311.40 L266.71 321.40 L265.93 337.25 A4.42 4.42 0 0 0 274.77 337.35 L274.77 337.35 L274.38 321.49 L274.14 311.49 L273.89 301.48 L273.77 291.48 L273.60 276.48 L272.94 261.47 L272.50 251.46 L272.47 246.46Z" fill="#101010"/><path d="M267.58 245.92 L266.45 250.79 L263.84 260.46 L259.93 274.97 L256.49 289.57 L254.19 299.31 L251.77 309.02 L249.35 318.73 L245.54 333.98 A4.42 4.42 0 0 0 254.19 335.80 L254.19 335.80 L256.86 320.31 L258.56 310.45 L260.26 300.59 L262.08 290.75 L264.82 276.00 L267.09 261.15 L268.60 251.25 L269.54 246.33Z" fill="#101010"/><path d="M264.43 244.63 L262.23 249.13 L257.51 257.96 L250.43 271.21 L243.79 284.67 L239.36 293.64 L234.82 302.55 L230.27 311.47 L222.95 325.82 A4.43 4.43 0 0 0 230.99 329.56 L230.99 329.56 L237.23 314.70 L241.11 305.47 L244.98 296.25 L248.98 287.08 L254.97 273.32 L260.52 259.36 L264.23 250.05 L266.24 245.48Z" fill="#101010"/><path d="M261.49 242.53 L258.29 246.38 L251.60 253.83 L241.57 265.02 L231.92 276.50 L225.48 284.16 L218.94 291.73 L212.41 299.31 L201.76 311.65 A4.44 4.44 0 0 0 208.69 317.19 L208.69 317.19 L218.40 304.11 L224.36 296.07 L230.32 288.03 L236.38 280.08 L245.48 268.14 L254.20 255.91 L260.01 247.75 L263.06 243.78Z" fill="#101010"/><path d="M259.38 240.14 L255.44 243.22 L247.33 249.10 L235.17 257.91 L223.30 267.10 L215.39 273.22 L207.41 279.25 L199.42 285.27 L183.02 297.76 A4.50 4.50 0 0 0 188.70 304.74 L188.70 304.74 L204.26 291.23 L211.78 284.63 L219.31 278.03 L226.91 271.53 L238.32 261.79 L249.43 251.67 L256.83 244.93 L260.65 241.69Z" fill="#101010"/><path d="M257.86 237.44 L253.37 239.64 L244.23 243.73 L230.51 249.86 L217.02 256.42 L208.02 260.79 L198.97 265.05 L189.91 269.31 L171.67 277.98 A4.50 4.50 0 0 0 175.80 285.97 L175.80 285.97 L193.43 276.13 L202.15 271.22 L210.86 266.30 L219.64 261.50 L232.81 254.31 L245.75 246.68 L254.38 241.60 L258.78 239.22Z" fill="#101010"/><path d="M256.94 234.56 L252.10 235.82 L242.33 238.00 L227.66 241.27 L213.13 245.00 L203.44 247.48 L193.72 249.85 L183.99 252.21 L164.12 257.13 A4.50 4.50 0 0 0 166.56 265.79 L166.56 265.79 L186.08 259.59 L195.60 256.52 L205.12 253.45 L214.68 250.50 L229.02 246.08 L243.23 241.20 L252.70 237.94 L257.49 236.49Z" fill="#101010"/><path d="M256.62 231.69 L251.63 232.00 L241.62 232.26 L226.60 232.66 L211.62 233.54 L201.63 234.12 L191.64 234.58 L181.64 235.03 L161.02 236.07 A4.50 4.50 0 0 0 161.76 245.04 L161.76 245.04 L182.27 242.68 L192.21 241.49 L202.14 240.30 L212.09 239.24 L227.01 237.64 L241.89 235.57 L251.81 234.19 L256.78 233.68Z" fill="#101010"/><path d="M256.80 229.13 L251.83 228.59 L241.91 227.15 L227.05 224.98 L212.14 223.30 L202.20 222.18 L192.27 220.93 L182.34 219.68 L161.78 217.19 A4.50 4.50 0 0 0 160.99 226.15 L160.99 226.15 L181.66 227.32 L191.66 227.84 L201.65 228.35 L211.63 229.00 L226.61 229.97 L241.62 230.45 L251.63 230.78 L256.62 231.12Z" fill="#101010"/><path d="M257.45 226.50 L252.66 225.08 L243.17 221.88 L228.93 217.08 L214.57 212.75 L204.99 209.86 L195.45 206.85 L185.90 203.84 L166.04 197.68 A4.50 4.50 0 0 0 163.65 206.35 L163.65 206.35 L183.87 211.24 L193.60 213.54 L203.34 215.84 L213.05 218.27 L227.60 221.90 L242.29 225.08 L252.08 227.20 L256.92 228.43Z" fill="#101010"/><path d="M258.59 224.00 L254.14 221.72 L245.39 216.85 L232.26 209.54 L218.93 202.67 L210.04 198.08 L201.20 193.38 L192.37 188.68 L174.94 179.49 A4.50 4.50 0 0 0 171.01 187.58 L171.01 187.58 L189.01 195.59 L198.17 199.62 L207.33 203.66 L216.43 207.81 L230.08 214.04 L243.94 219.84 L253.18 223.70 L257.72 225.80Z" fill="#101010"/><path d="M260.44 221.43 L256.56 218.27 L249.03 211.68 L237.72 201.78 L226.12 192.27 L218.39 185.92 L210.73 179.48 L203.08 173.03 L190.93 162.80 A4.42 4.42 0 0 0 185.49 169.77 L185.49 169.77 L198.36 179.08 L206.46 184.94 L214.57 190.81 L222.60 196.77 L234.65 205.72 L246.98 214.29 L255.21 220.01 L259.21 223.01Z" fill="#101010"/><path d="M263.01 219.15 L259.95 215.19 L254.11 207.06 L245.34 194.86 L236.20 182.95 L230.11 175.02 L224.12 167.01 L218.13 158.99 L211.25 149.79 A4.26 4.26 0 0 0 204.62 155.14 L204.62 155.14 L212.16 163.81 L218.72 171.36 L225.29 178.91 L231.75 186.55 L241.45 198.00 L251.52 209.14 L258.24 216.57 L261.45 220.40Z" fill="#101010"/><path d="M266.04 217.50 L263.97 212.95 L260.13 203.70 L254.38 189.82 L248.20 176.15 L244.08 167.03 L240.07 157.86 L236.07 148.69 L231.37 137.93 A4.27 4.27 0 0 0 223.68 141.64 L223.68 141.64 L229.15 152.02 L233.82 160.87 L238.49 169.72 L243.05 178.63 L249.88 191.99 L257.14 205.14 L261.98 213.91 L264.24 218.37Z" fill="#101010"/><path d="M269.33 216.60 L268.33 211.70 L266.68 201.82 L264.20 187.00 L261.26 172.29 L259.30 162.48 L257.46 152.64 L255.62 142.81 L253.32 130.45 A4.30 4.30 0 0 0 244.93 132.34 L244.93 132.34 L248.14 144.49 L250.69 154.17 L253.25 163.84 L255.68 173.54 L259.33 188.10 L263.44 202.55 L266.18 212.18 L267.38 217.04Z" fill="#101010"/></g>
<path d="M271.9 191.5L272.4 127.6M280.0 192.3L293.2 131.1M287.6 194.8L312.3 138.1M294.1 198.4L328.6 147.6M300.1 203.3L341.4 162.6M305.2 209.6L350.3 180.3M309.2 217.7L359.5 199.4M311.4 226.6L364.7 220.0M311.4 235.6L365.6 241.4M309.5 244.5L362.0 262.7M305.4 252.9L350.4 281.4M299.9 259.7L340.9 300.7M293.9 264.7L328.0 315.7M287.5 268.2L313.1 327.5M279.6 270.6L292.9 335.7M271.2 271.4L270.3 338.5M263.4 270.6L249.6 336.1M254.8 267.7L226.5 328.8M246.7 262.7L204.5 315.4M240.6 256.7L184.9 302.0M236.1 249.8L172.7 282.5M233.2 242.3L164.2 261.8M231.8 234.7L160.2 240.7M231.8 227.9L160.2 221.6M233.1 220.8L163.7 201.7M235.7 214.0L171.9 183.0M240.1 206.8L187.3 165.5M246.5 200.3L207.2 151.5M254.3 195.4L227.0 138.7M262.9 192.4L248.9 130.2" stroke="#4a4a4a" stroke-width="0.9" opacity="0.8"/>
<ellipse cx="271.65" cy="231.45" rx="18.2" ry="17.2" fill="#f0f0f0"/>
<ellipse cx="271.65" cy="231.45" rx="16.4" ry="15.4" fill="#3a3a3a"/>
<ellipse cx="271.65" cy="231.45" rx="15.6" ry="14.6" fill="#888"/>
</g>
<path d="M119.2 96.7H368.6V368.5H119.2Z M127.5 109H357.5V348H127.5Z" fill-rule="evenodd" fill="#fff" filter="url(#nz)"/>
<path d="M127.5 109H357.5V113H127.5Z M127.5 113H132V348H127.5Z M353.5 113H357.5V348H353.5Z M133 344H353.5V348H133Z" fill="#fff" filter="url(#nz)" opacity="0.45"/>
<path d="M129 113V348M141 113V348" stroke="#fff" filter="url(#nz)" stroke-width="12" opacity="0.0"/>
<path d="M164.2 114V348" stroke="#e8e8e8" stroke-width="0.9" opacity="0.8"/>
<path d="M129 114.5H355" stroke="#e8e8e8" stroke-width="0.9" stroke-dasharray="1.5 2.5" opacity="0.6"/>
<path d="M129 347.8H355" stroke="#f0f0f0" stroke-width="1.3"/>
<path d="M137 330.8H355" stroke="#e0e0e0" stroke-width="0.8" stroke-dasharray="2 2" opacity="0.5"/>
<path d="M137.5 113H140.5V348H137.5Z" fill="#fff" filter="url(#nz)" opacity="0.6"/>
<path d="M139 113V348" stroke="#202020" stroke-width="2" opacity="0.45"/>
<path d="M130.3 113V348" stroke="#e0e0e0" stroke-width="0.8" opacity="0.5"/>
<path d="M142.6 113V348" stroke="#e8e8e8" stroke-width="0.9" opacity="0.7"/>
</g>
<rect x="472.5" y="98.2" width="29.5" height="262.3" fill="#000038"/>
<path d="M472.5 71V387" stroke="#9a9a9a"/>
<path d="M472.5 100.4H476" stroke="#585860"/>
<text x="469" y="103.7" font-size="9.5" fill="#a3a3a3" text-anchor="end">1.4</text>
<path d="M472.5 131.1H476" stroke="#585860"/>
<text x="469" y="134.4" font-size="9.5" fill="#a3a3a3" text-anchor="end">1.3</text>
<path d="M472.5 161.8H476" stroke="#585860"/>
<text x="469" y="165.1" font-size="9.5" fill="#a3a3a3" text-anchor="end">1.2</text>
<path d="M472.5 192.5H476" stroke="#585860"/>
<text x="469" y="195.8" font-size="9.5" fill="#a3a3a3" text-anchor="end">1.1</text>
<path d="M472.5 223.2H476" stroke="#585860"/>
<text x="469" y="226.5" font-size="9.5" fill="#a3a3a3" text-anchor="end">1</text>
<path d="M472.5 253.9H476" stroke="#585860"/>
<text x="469" y="257.2" font-size="9.5" fill="#a3a3a3" text-anchor="end">0.9</text>
<path d="M472.5 284.5H476" stroke="#585860"/>
<text x="469" y="287.8" font-size="9.5" fill="#a3a3a3" text-anchor="end">0.8</text>
<path d="M472.5 315.2H476" stroke="#585860"/>
<text x="469" y="318.5" font-size="9.5" fill="#a3a3a3" text-anchor="end">0.7</text>
<path d="M472.5 345.9H476" stroke="#585860"/>
<text x="469" y="349.2" font-size="9.5" fill="#a3a3a3" text-anchor="end">0.6</text>
<path d="M472.5 376.6H476" stroke="#585860"/>
<text x="469" y="379.9" font-size="9.5" fill="#a3a3a3" text-anchor="end">0.5</text>
<path d="M498.8 71 L497.6 71.0 L497.3 98.0 L496.5 140.0 L495.6 180.0 L493.8 193.0 L491.5 205.0 L486.6 215.0 L480.0 221.0 L474.9 223.2 L482.0 225.0 L488.4 227.7 L491.8 235.0 L493.8 243.0 L495.1 260.0 L495.6 320.0 L494.6 326.0 L493.5 328.0 L495.4 331.0 L496.2 360.0 L496.4 372.0 L493.5 376.0 L491.0 378.5 L494.0 381.0 L496.0 384.0 L496.4 387.0 L498.8 387Z" fill="#5a5ad8"/>
<defs><linearGradient id="gb" x1="0" y1="0" x2="0" y2="1"><stop offset="0" stop-color="#fff"/><stop offset="1" stop-color="#000"/></linearGradient></defs>
<rect x="502.6" y="78.6" width="9.4" height="302.7" fill="url(#gb)"/>
<path d="M472.5 98.2H502M487 98.2L502 77.3H512.5" stroke="#8f8a3a" fill="none"/>
<path d="M472.5 360.5H502M487 360.5L502 381.3H512.5" stroke="#8f8a3a" fill="none"/>
<path d="M512.5 77.3L522 71.3V83.2Z" fill="#fff"/>
<path d="M512.5 381.3L521 375.8V386.8Z" fill="#000" stroke="#ddd"/>
<rect x="531" y="77" width="275" height="285" fill="#000"/>
<text x="653.90" y="90.70" font-size="9.80" fill="#a3a3a3" textLength="63.20" lengthAdjust="spacingAndGlyphs">x,y scatter plot</text>
<path d="M567 97.5V336H805" stroke="#9a9a9a" fill="none"/>
<path d="M567 323.0H571" stroke="#9a9a9a"/>
<text x="563.5" y="326.2" font-size="9" fill="#a3a3a3" text-anchor="end">-6</text>
<path d="M580.0 336V332" stroke="#9a9a9a"/>
<text x="580.0" y="346" font-size="9" fill="#a3a3a3" text-anchor="middle">-6</text>
<path d="M567 287.5H571" stroke="#9a9a9a"/>
<text x="563.5" y="290.7" font-size="9" fill="#a3a3a3" text-anchor="end">-4</text>
<path d="M615.2 336V332" stroke="#9a9a9a"/>
<text x="615.2" y="346" font-size="9" fill="#a3a3a3" text-anchor="middle">-4</text>
<path d="M567 252.1H571" stroke="#9a9a9a"/>
<text x="563.5" y="255.3" font-size="9" fill="#a3a3a3" text-anchor="end">-2</text>
<path d="M650.5 336V332" stroke="#9a9a9a"/>
<text x="650.5" y="346" font-size="9" fill="#a3a3a3" text-anchor="middle">-2</text>
<path d="M567 216.6H571" stroke="#9a9a9a"/>
<text x="563.5" y="219.8" font-size="9" fill="#a3a3a3" text-anchor="end">0</text>
<path d="M685.7 336V332" stroke="#9a9a9a"/>
<text x="685.7" y="346" font-size="9" fill="#a3a3a3" text-anchor="middle">0</text>
<path d="M567 181.1H571" stroke="#9a9a9a"/>
<text x="563.5" y="184.3" font-size="9" fill="#a3a3a3" text-anchor="end">2</text>
<path d="M720.9 336V332" stroke="#9a9a9a"/>
<text x="720.9" y="346" font-size="9" fill="#a3a3a3" text-anchor="middle">2</text>
<path d="M567 145.7H571" stroke="#9a9a9a"/>
<text x="563.5" y="148.9" font-size="9" fill="#a3a3a3" text-anchor="end">4</text>
<path d="M756.2 336V332" stroke="#9a9a9a"/>
<text x="756.2" y="346" font-size="9" fill="#a3a3a3" text-anchor="middle">4</text>
<path d="M567 110.2H571" stroke="#9a9a9a"/>
<text x="563.5" y="113.4" font-size="9" fill="#a3a3a3" text-anchor="end">6</text>
<path d="M791.4 336V332" stroke="#9a9a9a"/>
<text x="791.4" y="346" font-size="9" fill="#a3a3a3" text-anchor="middle">6</text>
<text x="645.60" y="359.60" font-size="9.60" fill="#a3a3a3" textLength="78.70" lengthAdjust="spacingAndGlyphs">x position (x1e-06)</text>
<text transform="translate(539.60 255.00) rotate(-90)" font-size="9.60" fill="#a3a3a3" textLength="78.20" lengthAdjust="spacingAndGlyphs">y position (x1e-06)</text>
<g fill="#7c7474" stroke="#cc8c8a" stroke-width="1.0"><circle cx="579.8" cy="109.9" r="1.65"/><circle cx="580.1" cy="121.1" r="1.65"/><circle cx="580.0" cy="132.5" r="1.65"/><circle cx="579.6" cy="143.8" r="1.65"/><circle cx="579.6" cy="155.0" r="1.65"/><circle cx="579.6" cy="165.9" r="1.65"/><circle cx="579.9" cy="177.7" r="1.65"/><circle cx="579.7" cy="188.4" r="1.65"/><circle cx="580.1" cy="200.2" r="1.65"/><circle cx="580.0" cy="210.9" r="1.65"/><circle cx="580.4" cy="221.8" r="1.65"/><circle cx="580.3" cy="233.2" r="1.65"/><circle cx="579.7" cy="244.3" r="1.65"/><circle cx="579.8" cy="256.0" r="1.65"/><circle cx="579.7" cy="267.1" r="1.65"/><circle cx="580.1" cy="278.1" r="1.65"/><circle cx="580.0" cy="289.0" r="1.65"/><circle cx="579.6" cy="300.3" r="1.65"/><circle cx="580.1" cy="311.7" r="1.65"/><circle cx="579.8" cy="323.0" r="1.65"/><circle cx="591.1" cy="110.1" r="1.65"/><circle cx="591.3" cy="121.6" r="1.65"/><circle cx="590.9" cy="132.7" r="1.65"/><circle cx="591.1" cy="144.1" r="1.65"/><circle cx="591.3" cy="154.8" r="1.65"/><circle cx="591.5" cy="165.9" r="1.65"/><circle cx="591.0" cy="177.6" r="1.65"/><circle cx="590.8" cy="188.6" r="1.65"/><circle cx="590.7" cy="199.9" r="1.65"/><circle cx="591.3" cy="211.1" r="1.65"/><circle cx="591.4" cy="222.0" r="1.65"/><circle cx="591.3" cy="233.5" r="1.65"/><circle cx="590.7" cy="322.9" r="1.65"/><circle cx="602.0" cy="109.9" r="1.65"/><circle cx="601.9" cy="121.6" r="1.65"/><circle cx="601.9" cy="132.4" r="1.65"/><circle cx="602.1" cy="144.1" r="1.65"/><circle cx="601.9" cy="155.0" r="1.65"/><circle cx="602.3" cy="166.5" r="1.65"/><circle cx="602.5" cy="177.7" r="1.65"/><circle cx="602.1" cy="188.5" r="1.65"/><circle cx="602.1" cy="200.1" r="1.65"/><circle cx="602.6" cy="210.7" r="1.65"/><circle cx="602.0" cy="222.0" r="1.65"/><circle cx="602.0" cy="233.4" r="1.65"/><circle cx="602.5" cy="323.2" r="1.65"/><circle cx="613.3" cy="110.1" r="1.65"/><circle cx="613.0" cy="121.5" r="1.65"/><circle cx="613.0" cy="132.3" r="1.65"/><circle cx="613.1" cy="143.5" r="1.65"/><circle cx="613.2" cy="154.7" r="1.65"/><circle cx="613.0" cy="165.9" r="1.65"/><circle cx="613.0" cy="177.3" r="1.65"/><circle cx="613.0" cy="188.9" r="1.65"/><circle cx="613.5" cy="199.5" r="1.65"/><circle cx="613.2" cy="210.9" r="1.65"/><circle cx="613.3" cy="221.9" r="1.65"/><circle cx="613.6" cy="233.8" r="1.65"/><circle cx="613.4" cy="323.4" r="1.65"/><circle cx="624.8" cy="110.4" r="1.65"/><circle cx="624.3" cy="121.3" r="1.65"/><circle cx="624.2" cy="132.8" r="1.65"/><circle cx="624.5" cy="144.0" r="1.65"/><circle cx="624.4" cy="154.8" r="1.65"/><circle cx="624.7" cy="166.6" r="1.65"/><circle cx="624.8" cy="177.7" r="1.65"/><circle cx="624.7" cy="188.8" r="1.65"/><circle cx="624.3" cy="199.8" r="1.65"/><circle cx="624.4" cy="210.6" r="1.65"/><circle cx="624.1" cy="222.0" r="1.65"/><circle cx="624.3" cy="233.6" r="1.65"/><circle cx="624.6" cy="323.2" r="1.65"/><circle cx="635.3" cy="110.3" r="1.65"/><circle cx="635.9" cy="121.6" r="1.65"/><circle cx="635.8" cy="132.6" r="1.65"/><circle cx="635.4" cy="144.0" r="1.65"/><circle cx="635.5" cy="155.3" r="1.65"/><circle cx="636.0" cy="166.1" r="1.65"/><circle cx="635.5" cy="177.8" r="1.65"/><circle cx="635.8" cy="188.3" r="1.65"/><circle cx="635.3" cy="199.5" r="1.65"/><circle cx="635.9" cy="211.2" r="1.65"/><circle cx="635.3" cy="222.5" r="1.65"/><circle cx="636.0" cy="233.5" r="1.65"/><circle cx="635.4" cy="323.0" r="1.65"/><circle cx="646.6" cy="110.2" r="1.65"/><circle cx="646.5" cy="121.7" r="1.65"/><circle cx="646.6" cy="132.6" r="1.65"/><circle cx="646.8" cy="144.1" r="1.65"/><circle cx="646.7" cy="155.3" r="1.65"/><circle cx="646.8" cy="166.2" r="1.65"/><circle cx="646.8" cy="177.0" r="1.65"/><circle cx="646.7" cy="188.4" r="1.65"/><circle cx="646.4" cy="200.0" r="1.65"/><circle cx="646.5" cy="211.0" r="1.65"/><circle cx="646.9" cy="222.2" r="1.65"/><circle cx="646.6" cy="233.4" r="1.65"/><circle cx="646.8" cy="323.1" r="1.65"/><circle cx="657.8" cy="110.2" r="1.65"/><circle cx="657.9" cy="121.8" r="1.65"/><circle cx="658.0" cy="132.9" r="1.65"/><circle cx="658.2" cy="143.6" r="1.65"/><circle cx="657.9" cy="155.4" r="1.65"/><circle cx="658.2" cy="165.9" r="1.65"/><circle cx="657.6" cy="177.4" r="1.65"/><circle cx="657.5" cy="188.4" r="1.65"/><circle cx="657.5" cy="199.9" r="1.65"/><circle cx="658.1" cy="211.3" r="1.65"/><circle cx="657.6" cy="222.4" r="1.65"/><circle cx="658.0" cy="233.1" r="1.65"/><circle cx="658.2" cy="245.0" r="1.65"/><circle cx="657.7" cy="256.2" r="1.65"/><circle cx="657.8" cy="267.0" r="1.65"/><circle cx="658.3" cy="278.5" r="1.65"/><circle cx="657.6" cy="289.3" r="1.65"/><circle cx="657.9" cy="300.5" r="1.65"/><circle cx="657.6" cy="311.6" r="1.65"/><circle cx="658.1" cy="322.6" r="1.65"/><circle cx="669.1" cy="110.2" r="1.65"/><circle cx="668.6" cy="121.3" r="1.65"/><circle cx="669.1" cy="132.6" r="1.65"/><circle cx="668.7" cy="144.2" r="1.65"/><circle cx="669.2" cy="155.4" r="1.65"/><circle cx="668.7" cy="166.0" r="1.65"/><circle cx="668.6" cy="177.6" r="1.65"/><circle cx="668.8" cy="188.3" r="1.65"/><circle cx="668.9" cy="200.1" r="1.65"/><circle cx="669.3" cy="210.8" r="1.65"/><circle cx="668.7" cy="222.5" r="1.65"/><circle cx="669.1" cy="233.6" r="1.65"/><circle cx="668.7" cy="244.2" r="1.65"/><circle cx="669.2" cy="255.7" r="1.65"/><circle cx="668.7" cy="267.3" r="1.65"/><circle cx="669.1" cy="278.4" r="1.65"/><circle cx="668.7" cy="289.7" r="1.65"/><circle cx="668.7" cy="300.9" r="1.65"/><circle cx="669.0" cy="311.7" r="1.65"/><circle cx="669.0" cy="323.3" r="1.65"/><circle cx="680.0" cy="109.9" r="1.65"/><circle cx="680.2" cy="121.2" r="1.65"/><circle cx="679.8" cy="132.3" r="1.65"/><circle cx="679.8" cy="143.6" r="1.65"/><circle cx="680.0" cy="154.9" r="1.65"/><circle cx="680.3" cy="166.0" r="1.65"/><circle cx="680.1" cy="177.1" r="1.65"/><circle cx="680.0" cy="188.2" r="1.65"/><circle cx="679.9" cy="199.4" r="1.65"/><circle cx="680.3" cy="211.0" r="1.65"/><circle cx="679.9" cy="222.2" r="1.65"/><circle cx="680.5" cy="233.1" r="1.65"/><circle cx="680.4" cy="244.5" r="1.65"/><circle cx="680.1" cy="256.1" r="1.65"/><circle cx="680.1" cy="267.0" r="1.65"/><circle cx="680.3" cy="278.6" r="1.65"/><circle cx="680.0" cy="289.7" r="1.65"/><circle cx="680.3" cy="300.7" r="1.65"/><circle cx="680.1" cy="311.7" r="1.65"/><circle cx="679.8" cy="322.7" r="1.65"/><circle cx="690.9" cy="110.4" r="1.65"/><circle cx="691.1" cy="121.1" r="1.65"/><circle cx="690.9" cy="132.9" r="1.65"/><circle cx="691.6" cy="144.0" r="1.65"/><circle cx="691.1" cy="154.8" r="1.65"/><circle cx="691.1" cy="166.2" r="1.65"/><circle cx="691.0" cy="177.4" r="1.65"/><circle cx="691.1" cy="189.0" r="1.65"/><circle cx="691.6" cy="199.8" r="1.65"/><circle cx="691.1" cy="211.4" r="1.65"/><circle cx="691.1" cy="222.1" r="1.65"/><circle cx="690.9" cy="233.3" r="1.65"/><circle cx="691.2" cy="244.6" r="1.65"/><circle cx="691.0" cy="255.8" r="1.65"/><circle cx="690.9" cy="266.8" r="1.65"/><circle cx="690.9" cy="278.1" r="1.65"/><circle cx="690.9" cy="289.0" r="1.65"/><circle cx="691.1" cy="300.4" r="1.65"/><circle cx="691.3" cy="311.8" r="1.65"/><circle cx="691.5" cy="323.1" r="1.65"/><circle cx="702.6" cy="110.5" r="1.65"/><circle cx="702.3" cy="121.3" r="1.65"/><circle cx="702.8" cy="132.3" r="1.65"/><circle cx="702.6" cy="143.9" r="1.65"/><circle cx="702.0" cy="155.3" r="1.65"/><circle cx="702.7" cy="166.3" r="1.65"/><circle cx="702.6" cy="177.7" r="1.65"/><circle cx="702.1" cy="188.6" r="1.65"/><circle cx="702.4" cy="200.1" r="1.65"/><circle cx="702.6" cy="211.3" r="1.65"/><circle cx="702.5" cy="222.5" r="1.65"/><circle cx="702.5" cy="233.6" r="1.65"/><circle cx="702.2" cy="244.2" r="1.65"/><circle cx="702.1" cy="255.7" r="1.65"/><circle cx="702.1" cy="267.3" r="1.65"/><circle cx="702.4" cy="278.3" r="1.65"/><circle cx="702.5" cy="289.5" r="1.65"/><circle cx="702.4" cy="300.2" r="1.65"/><circle cx="702.6" cy="312.0" r="1.65"/><circle cx="702.4" cy="323.0" r="1.65"/><circle cx="713.6" cy="109.9" r="1.65"/><circle cx="713.7" cy="121.2" r="1.65"/><circle cx="713.2" cy="132.4" r="1.65"/><circle cx="713.7" cy="143.6" r="1.65"/><circle cx="713.7" cy="155.4" r="1.65"/><circle cx="713.5" cy="166.1" r="1.65"/><circle cx="713.5" cy="177.6" r="1.65"/><circle cx="713.7" cy="188.7" r="1.65"/><circle cx="713.6" cy="199.5" r="1.65"/><circle cx="713.2" cy="210.8" r="1.65"/><circle cx="713.7" cy="222.0" r="1.65"/><circle cx="713.6" cy="233.0" r="1.65"/><circle cx="713.2" cy="244.4" r="1.65"/><circle cx="713.7" cy="255.9" r="1.65"/><circle cx="713.7" cy="266.8" r="1.65"/><circle cx="713.5" cy="278.2" r="1.65"/><circle cx="713.5" cy="289.1" r="1.65"/><circle cx="713.8" cy="300.3" r="1.65"/><circle cx="713.9" cy="312.1" r="1.65"/><circle cx="713.1" cy="322.9" r="1.65"/><circle cx="724.9" cy="110.6" r="1.65"/><circle cx="724.6" cy="121.2" r="1.65"/><circle cx="724.4" cy="133.0" r="1.65"/><circle cx="724.4" cy="143.9" r="1.65"/><circle cx="724.4" cy="155.0" r="1.65"/><circle cx="725.0" cy="165.9" r="1.65"/><circle cx="724.9" cy="177.4" r="1.65"/><circle cx="725.0" cy="188.8" r="1.65"/><circle cx="724.4" cy="200.1" r="1.65"/><circle cx="724.6" cy="210.6" r="1.65"/><circle cx="724.3" cy="222.2" r="1.65"/><circle cx="724.6" cy="233.2" r="1.65"/><circle cx="724.4" cy="244.5" r="1.65"/><circle cx="724.5" cy="256.1" r="1.65"/><circle cx="724.3" cy="267.2" r="1.65"/><circle cx="724.9" cy="277.9" r="1.65"/><circle cx="725.0" cy="289.6" r="1.65"/><circle cx="725.0" cy="300.4" r="1.65"/><circle cx="724.5" cy="311.7" r="1.65"/><circle cx="725.0" cy="323.1" r="1.65"/><circle cx="735.7" cy="110.2" r="1.65"/><circle cx="735.6" cy="121.1" r="1.65"/><circle cx="735.5" cy="132.9" r="1.65"/><circle cx="735.6" cy="144.2" r="1.65"/><circle cx="735.6" cy="154.8" r="1.65"/><circle cx="735.8" cy="166.0" r="1.65"/><circle cx="735.7" cy="177.8" r="1.65"/><circle cx="736.1" cy="188.9" r="1.65"/><circle cx="735.9" cy="200.1" r="1.65"/><circle cx="736.1" cy="211.0" r="1.65"/><circle cx="736.0" cy="221.8" r="1.65"/><circle cx="736.0" cy="233.4" r="1.65"/><circle cx="736.0" cy="244.7" r="1.65"/><circle cx="735.6" cy="255.4" r="1.65"/><circle cx="736.1" cy="266.7" r="1.65"/><circle cx="735.8" cy="278.1" r="1.65"/><circle cx="735.6" cy="289.6" r="1.65"/><circle cx="736.2" cy="300.4" r="1.65"/><circle cx="735.9" cy="311.6" r="1.65"/><circle cx="735.8" cy="322.9" r="1.65"/><circle cx="746.6" cy="109.9" r="1.65"/><circle cx="746.7" cy="121.7" r="1.65"/><circle cx="746.9" cy="132.4" r="1.65"/><circle cx="747.2" cy="144.2" r="1.65"/><circle cx="746.9" cy="154.7" r="1.65"/><circle cx="746.7" cy="165.9" r="1.65"/><circle cx="746.8" cy="177.1" r="1.65"/><circle cx="746.7" cy="188.4" r="1.65"/><circle cx="747.0" cy="200.1" r="1.65"/><circle cx="747.1" cy="210.9" r="1.65"/><circle cx="746.8" cy="222.2" r="1.65"/><circle cx="746.8" cy="233.3" r="1.65"/><circle cx="746.6" cy="244.4" r="1.65"/><circle cx="747.3" cy="255.5" r="1.65"/><circle cx="746.9" cy="267.1" r="1.65"/><circle cx="747.2" cy="278.0" r="1.65"/><circle cx="746.7" cy="289.2" r="1.65"/><circle cx="746.8" cy="300.5" r="1.65"/><circle cx="747.3" cy="312.1" r="1.65"/><circle cx="747.2" cy="322.6" r="1.65"/><circle cx="757.7" cy="110.4" r="1.65"/><circle cx="758.4" cy="121.4" r="1.65"/><circle cx="758.1" cy="132.2" r="1.65"/><circle cx="757.9" cy="144.2" r="1.65"/><circle cx="758.3" cy="155.3" r="1.65"/><circle cx="758.4" cy="166.0" r="1.65"/><circle cx="757.7" cy="177.1" r="1.65"/><circle cx="758.1" cy="188.8" r="1.65"/><circle cx="758.4" cy="200.0" r="1.65"/><circle cx="758.2" cy="211.2" r="1.65"/><circle cx="758.0" cy="222.2" r="1.65"/><circle cx="757.7" cy="233.6" r="1.65"/><circle cx="757.8" cy="244.9" r="1.65"/><circle cx="758.2" cy="255.6" r="1.65"/><circle cx="757.7" cy="266.8" r="1.65"/><circle cx="758.1" cy="278.3" r="1.65"/><circle cx="757.7" cy="289.0" r="1.65"/><circle cx="758.1" cy="300.7" r="1.65"/><circle cx="757.9" cy="311.6" r="1.65"/><circle cx="758.1" cy="322.6" r="1.65"/><circle cx="769.0" cy="110.2" r="1.65"/><circle cx="769.5" cy="121.5" r="1.65"/><circle cx="769.5" cy="132.6" r="1.65"/><circle cx="769.0" cy="143.6" r="1.65"/><circle cx="769.5" cy="155.2" r="1.65"/><circle cx="769.0" cy="165.8" r="1.65"/><circle cx="769.2" cy="177.5" r="1.65"/><circle cx="769.1" cy="188.4" r="1.65"/><circle cx="769.3" cy="200.1" r="1.65"/><circle cx="768.9" cy="210.6" r="1.65"/><circle cx="769.0" cy="222.1" r="1.65"/><circle cx="769.3" cy="233.2" r="1.65"/><circle cx="769.4" cy="244.8" r="1.65"/><circle cx="769.2" cy="255.6" r="1.65"/><circle cx="769.5" cy="266.8" r="1.65"/><circle cx="769.4" cy="278.0" r="1.65"/><circle cx="768.9" cy="289.6" r="1.65"/><circle cx="769.0" cy="300.9" r="1.65"/><circle cx="769.2" cy="311.5" r="1.65"/><circle cx="768.9" cy="322.9" r="1.65"/><circle cx="780.4" cy="110.6" r="1.65"/><circle cx="780.0" cy="121.3" r="1.65"/><circle cx="780.1" cy="133.0" r="1.65"/><circle cx="780.0" cy="143.5" r="1.65"/><circle cx="779.9" cy="154.9" r="1.65"/><circle cx="780.6" cy="166.5" r="1.65"/><circle cx="780.5" cy="177.8" r="1.65"/><circle cx="780.6" cy="188.5" r="1.65"/><circle cx="780.0" cy="200.2" r="1.65"/><circle cx="780.5" cy="210.6" r="1.65"/><circle cx="780.4" cy="222.1" r="1.65"/><circle cx="780.2" cy="233.3" r="1.65"/><circle cx="780.0" cy="244.2" r="1.65"/><circle cx="780.1" cy="255.7" r="1.65"/><circle cx="780.7" cy="266.7" r="1.65"/><circle cx="780.7" cy="278.0" r="1.65"/><circle cx="780.2" cy="289.6" r="1.65"/><circle cx="780.5" cy="300.5" r="1.65"/><circle cx="779.9" cy="311.8" r="1.65"/><circle cx="780.2" cy="323.3" r="1.65"/><circle cx="791.2" cy="110.1" r="1.65"/><circle cx="791.7" cy="121.0" r="1.65"/><circle cx="791.3" cy="132.9" r="1.65"/><circle cx="791.6" cy="143.4" r="1.65"/><circle cx="791.0" cy="154.7" r="1.65"/><circle cx="791.8" cy="166.0" r="1.65"/><circle cx="791.6" cy="177.7" r="1.65"/><circle cx="791.3" cy="188.4" r="1.65"/><circle cx="791.8" cy="199.9" r="1.65"/><circle cx="791.2" cy="211.2" r="1.65"/><circle cx="791.3" cy="222.0" r="1.65"/><circle cx="791.0" cy="233.6" r="1.65"/><circle cx="791.8" cy="244.7" r="1.65"/><circle cx="791.8" cy="255.4" r="1.65"/><circle cx="791.2" cy="267.0" r="1.65"/><circle cx="791.8" cy="278.6" r="1.65"/><circle cx="791.3" cy="289.2" r="1.65"/><circle cx="791.4" cy="300.6" r="1.65"/><circle cx="791.8" cy="311.5" r="1.65"/><circle cx="791.7" cy="323.2" r="1.65"/></g>
<g fill="#8a8a8a"><circle cx="591.2" cy="244.6" r="1.75"/><circle cx="591.4" cy="256.1" r="1.75"/><circle cx="591.1" cy="267.1" r="1.75"/><circle cx="590.8" cy="278.3" r="1.75"/><circle cx="591.2" cy="289.8" r="1.75"/><circle cx="591.4" cy="300.4" r="1.75"/><circle cx="591.0" cy="311.9" r="1.75"/><circle cx="602.3" cy="244.4" r="1.75"/><circle cx="601.8" cy="255.7" r="1.75"/><circle cx="602.1" cy="267.0" r="1.75"/><circle cx="602.6" cy="278.3" r="1.75"/><circle cx="602.2" cy="289.5" r="1.75"/><circle cx="602.4" cy="300.2" r="1.75"/><circle cx="602.6" cy="312.0" r="1.75"/><circle cx="613.3" cy="244.6" r="1.75"/><circle cx="613.0" cy="255.5" r="1.75"/><circle cx="613.2" cy="266.8" r="1.75"/><circle cx="613.6" cy="277.9" r="1.75"/><circle cx="613.0" cy="289.7" r="1.75"/><circle cx="613.4" cy="300.3" r="1.75"/><circle cx="613.4" cy="311.4" r="1.75"/><circle cx="624.9" cy="244.6" r="1.75"/><circle cx="624.8" cy="256.2" r="1.75"/><circle cx="624.9" cy="266.9" r="1.75"/><circle cx="624.3" cy="278.0" r="1.75"/><circle cx="624.3" cy="289.1" r="1.75"/><circle cx="624.6" cy="300.9" r="1.75"/><circle cx="624.8" cy="311.8" r="1.75"/><circle cx="635.5" cy="244.6" r="1.75"/><circle cx="635.3" cy="255.4" r="1.75"/><circle cx="636.0" cy="267.1" r="1.75"/><circle cx="635.6" cy="278.5" r="1.75"/><circle cx="635.6" cy="289.7" r="1.75"/><circle cx="635.9" cy="300.4" r="1.75"/><circle cx="635.4" cy="311.6" r="1.75"/><circle cx="646.8" cy="244.8" r="1.75"/><circle cx="646.4" cy="255.8" r="1.75"/><circle cx="646.5" cy="266.8" r="1.75"/><circle cx="647.0" cy="278.2" r="1.75"/><circle cx="646.8" cy="289.6" r="1.75"/><circle cx="647.1" cy="300.5" r="1.75"/><circle cx="646.8" cy="311.8" r="1.75"/></g>
<rect x="587.5" y="238.7" width="63.5" height="77.9" fill="none" stroke="#c8c8c8"/>
<path d="M651 235L654.5 238.7L651 242.4L647.5 238.7Z" fill="none" stroke="#5aa0a0"/>
<circle cx="691.4" cy="222.2" r="3.2" fill="#1c1cff" stroke="#5a64ff" stroke-width="0.7"/>
<rect x="16" y="392" width="795" height="88" fill="#000"/>
<text x="301.90" y="405.60" font-size="9.20" fill="#a3a3a3" textLength="258.30" lengthAdjust="spacingAndGlyphs">realspace x (red) and y (green) sample positions in pixel units</text>
<path d="M52.5 410.8V454.3H811" stroke="#9a9a9a" fill="none"/>
<path d="M52.5 415.0H54.5" stroke="#9a9a9a"/>
<path d="M52.5 420.8H54.5" stroke="#9a9a9a"/>
<path d="M52.5 426.5H54.5" stroke="#9a9a9a"/>
<path d="M52.5 432.3H56.0" stroke="#9a9a9a"/>
<path d="M52.5 438.1H54.5" stroke="#9a9a9a"/>
<path d="M52.5 443.8H54.5" stroke="#9a9a9a"/>
<path d="M52.5 449.6H54.5" stroke="#9a9a9a"/>
<text x="48.5" y="435.5" font-size="9" fill="#a3a3a3" text-anchor="end">0</text>
<path d="M73.0 454.3V450.3" stroke="#9a9a9a"/>
<text x="73.0" y="463.3" font-size="9" fill="#a3a3a3" text-anchor="middle">0</text>
<path d="M252.7 454.3V450.3" stroke="#9a9a9a"/>
<text x="252.7" y="463.3" font-size="9" fill="#a3a3a3" text-anchor="middle">100</text>
<path d="M432.4 454.3V450.3" stroke="#9a9a9a"/>
<text x="432.4" y="463.3" font-size="9" fill="#a3a3a3" text-anchor="middle">200</text>
<path d="M612.1 454.3V450.3" stroke="#9a9a9a"/>
<text x="612.1" y="463.3" font-size="9" fill="#a3a3a3" text-anchor="middle">300</text>
<path d="M791.8 454.3V450.3" stroke="#9a9a9a"/>
<text x="791.8" y="463.3" font-size="9" fill="#a3a3a3" text-anchor="middle">400</text>
<path d="M108.9 454.3V452.3" stroke="#9a9a9a"/>
<path d="M144.9 454.3V452.3" stroke="#9a9a9a"/>
<path d="M180.8 454.3V452.3" stroke="#9a9a9a"/>
<path d="M216.8 454.3V452.3" stroke="#9a9a9a"/>
<path d="M288.6 454.3V452.3" stroke="#9a9a9a"/>
<path d="M324.6 454.3V452.3" stroke="#9a9a9a"/>
<path d="M360.5 454.3V452.3" stroke="#9a9a9a"/>
<path d="M396.5 454.3V452.3" stroke="#9a9a9a"/>
<path d="M468.3 454.3V452.3" stroke="#9a9a9a"/>
<path d="M504.3 454.3V452.3" stroke="#9a9a9a"/>
<path d="M540.2 454.3V452.3" stroke="#9a9a9a"/>
<path d="M576.2 454.3V452.3" stroke="#9a9a9a"/>
<path d="M648.0 454.3V452.3" stroke="#9a9a9a"/>
<path d="M684.0 454.3V452.3" stroke="#9a9a9a"/>
<path d="M719.9 454.3V452.3" stroke="#9a9a9a"/>
<path d="M755.9 454.3V452.3" stroke="#9a9a9a"/>
<text x="399.30" y="477.50" font-size="9.60" fill="#a3a3a3" textLength="60.80" lengthAdjust="spacingAndGlyphs">frame number</text>
<text transform="translate(25.60 467.00) rotate(-90)" font-size="9.60" fill="#a3a3a3" textLength="69.40" lengthAdjust="spacingAndGlyphs">position (x1e-06)</text>
<polyline points="73.0 449.9 74.8 449.9 76.6 449.9 78.4 449.9 80.2 449.9 82.0 449.9 83.8 449.9 85.6 449.9 87.4 449.9 89.2 449.9 91.0 449.9 92.8 449.9 94.6 449.9 96.4 449.9 98.2 449.9 100.0 449.9 101.8 449.9 103.5 449.9 105.3 449.9 107.1 449.9 108.9 448.0 110.7 448.0 112.5 448.0 114.3 448.0 116.1 448.0 117.9 448.0 119.7 448.0 121.5 448.0 123.3 448.0 125.1 448.0 126.9 448.0 128.7 448.0 130.5 448.0 132.3 448.0 134.1 448.0 135.9 448.0 137.7 448.0 139.5 448.0 141.3 448.0 143.1 448.0 144.9 446.2 146.7 446.2 148.5 446.2 150.3 446.2 152.1 446.2 153.9 446.2 155.7 446.2 157.5 446.2 159.3 446.2 161.1 446.2 162.8 446.2 164.6 446.2 166.4 446.2 168.2 446.2 170.0 446.2 171.8 446.2 173.6 446.2 175.4 446.2 177.2 446.2 179.0 446.2 180.8 444.4 182.6 444.4 184.4 444.4 186.2 444.4 188.0 444.4 189.8 444.4 191.6 444.4 193.4 444.4 195.2 444.4 197.0 444.4 198.8 444.4 200.6 444.4 202.4 444.4 204.2 444.4 206.0 444.4 207.8 444.4 209.6 444.4 211.4 444.4 213.2 444.4 215.0 444.4 216.8 442.5 218.6 442.5 220.4 442.5 222.2 442.5 223.9 442.5 225.7 442.5 227.5 442.5 229.3 442.5 231.1 442.5 232.9 442.5 234.7 442.5 236.5 442.5 238.3 442.5 240.1 442.5 241.9 442.5 243.7 442.5 245.5 442.5 247.3 442.5 249.1 442.5 250.9 442.5 252.7 440.7 254.5 440.7 256.3 440.7 258.1 440.7 259.9 440.7 261.7 440.7 263.5 440.7 265.3 440.7 267.1 440.7 268.9 440.7 270.7 440.7 272.5 440.7 274.3 440.7 276.1 440.7 277.9 440.7 279.7 440.7 281.5 440.7 283.2 440.7 285.0 440.7 286.8 440.7 288.6 438.9 290.4 438.9 292.2 438.9 294.0 438.9 295.8 438.9 297.6 438.9 299.4 438.9 301.2 438.9 303.0 438.9 304.8 438.9 306.6 438.9 308.4 438.9 310.2 438.9 312.0 438.9 313.8 438.9 315.6 438.9 317.4 438.9 319.2 438.9 321.0 438.9 322.8 438.9 324.6 437.1 326.4 437.1 328.2 437.1 330.0 437.1 331.8 437.1 333.6 437.1 335.4 437.1 337.2 437.1 339.0 437.1 340.8 437.1 342.6 437.1 344.3 437.1 346.1 437.1 347.9 437.1 349.7 437.1 351.5 437.1 353.3 437.1 355.1 437.1 356.9 437.1 358.7 437.1 360.5 435.2 362.3 435.2 364.1 435.2 365.9 435.2 367.7 435.2 369.5 435.2 371.3 435.2 373.1 435.2 374.9 435.2 376.7 435.2 378.5 435.2 380.3 435.2 382.1 435.2 383.9 435.2 385.7 435.2 387.5 435.2 389.3 435.2 391.1 435.2 392.9 435.2 394.7 435.2 396.5 433.4 398.3 433.4 400.1 433.4 401.9 433.4 403.6 433.4 405.4 433.4 407.2 433.4 409.0 433.4 410.8 433.4 412.6 433.4 414.4 433.4 416.2 433.4 418.0 433.4 419.8 433.4 421.6 433.4 423.4 433.4 425.2 433.4 427.0 433.4 428.8 433.4 430.6 433.4 432.4 431.6 434.2 431.6 436.0 431.6 437.8 431.6 439.6 431.6 441.4 431.6 443.2 431.6 445.0 431.6 446.8 431.6 448.6 431.6 450.4 431.6 452.2 431.6 454.0 431.6 455.8 431.6 457.6 431.6 459.4 431.6 461.2 431.6 462.9 431.6 464.7 431.6 466.5 431.6 468.3 429.8 470.1 429.8 471.9 429.8 473.7 429.8 475.5 429.8 477.3 429.8 479.1 429.8 480.9 429.8 482.7 429.8 484.5 429.8 486.3 429.8 488.1 429.8 489.9 429.8 491.7 429.8 493.5 429.8 495.3 429.8 497.1 429.8 498.9 429.8 500.7 429.8 502.5 429.8 504.3 427.9 506.1 427.9 507.9 427.9 509.7 427.9 511.5 427.9 513.3 427.9 515.1 427.9 516.9 427.9 518.7 427.9 520.5 427.9 522.2 427.9 524.0 427.9 525.8 427.9 527.6 427.9 529.4 427.9 531.2 427.9 533.0 427.9 534.8 427.9 536.6 427.9 538.4 427.9 540.2 426.1 542.0 426.1 543.8 426.1 545.6 426.1 547.4 426.1 549.2 426.1 551.0 426.1 552.8 426.1 554.6 426.1 556.4 426.1 558.2 426.1 560.0 426.1 561.8 426.1 563.6 426.1 565.4 426.1 567.2 426.1 569.0 426.1 570.8 426.1 572.6 426.1 574.4 426.1 576.2 424.3 578.0 424.3 579.8 424.3 581.6 424.3 583.3 424.3 585.1 424.3 586.9 424.3 588.7 424.3 590.5 424.3 592.3 424.3 594.1 424.3 595.9 424.3 597.7 424.3 599.5 424.3 601.3 424.3 603.1 424.3 604.9 424.3 606.7 424.3 608.5 424.3 610.3 424.3 612.1 422.5 613.9 422.5 615.7 422.5 617.5 422.5 619.3 422.5 621.1 422.5 622.9 422.5 624.7 422.5 626.5 422.5 628.3 422.5 630.1 422.5 631.9 422.5 633.7 422.5 635.5 422.5 637.3 422.5 639.1 422.5 640.9 422.5 642.6 422.5 644.4 422.5 646.2 422.5 648.0 420.6 649.8 420.6 651.6 420.6 653.4 420.6 655.2 420.6 657.0 420.6 658.8 420.6 660.6 420.6 662.4 420.6 664.2 420.6 666.0 420.6 667.8 420.6 669.6 420.6 671.4 420.6 673.2 420.6 675.0 420.6 676.8 420.6 678.6 420.6 680.4 420.6 682.2 420.6 684.0 418.8 685.8 418.8 687.6 418.8 689.4 418.8 691.2 418.8 693.0 418.8 694.8 418.8 696.6 418.8 698.4 418.8 700.2 418.8 701.9 418.8 703.7 418.8 705.5 418.8 707.3 418.8 709.1 418.8 710.9 418.8 712.7 418.8 714.5 418.8 716.3 418.8 718.1 418.8 719.9 417.0 721.7 417.0 723.5 417.0 725.3 417.0 727.1 417.0 728.9 417.0 730.7 417.0 732.5 417.0 734.3 417.0 736.1 417.0 737.9 417.0 739.7 417.0 741.5 417.0 743.3 417.0 745.1 417.0 746.9 417.0 748.7 417.0 750.5 417.0 752.3 417.0 754.1 417.0 755.9 415.1 757.7 415.1 759.5 415.1 761.3 415.1 763.0 415.1 764.8 415.1 766.6 415.1 768.4 415.1 770.2 415.1 772.0 415.1 773.8 415.1 775.6 415.1 777.4 415.1 779.2 415.1 781.0 415.1 782.8 415.1 784.6 415.1 786.4 415.1 788.2 415.1 790.0 415.1" fill="none" stroke="#a46262" stroke-width="1.2"/>
<polyline points="73.0 449.9 74.8 448.0 76.6 446.2 78.4 444.4 80.2 442.5 82.0 440.7 83.8 438.9 85.6 437.1 87.4 435.2 89.2 433.4 91.0 431.6 92.8 429.8 94.6 427.9 96.4 426.1 98.2 424.3 100.0 422.5 101.8 420.6 103.5 418.8 105.3 417.0 107.1 415.1 108.9 449.9 110.7 448.0 112.5 446.2 114.3 444.4 116.1 442.5 117.9 440.7 119.7 438.9 121.5 437.1 123.3 435.2 125.1 433.4 126.9 431.6 128.7 429.8 130.5 427.9 132.3 426.1 134.1 424.3 135.9 422.5 137.7 420.6 139.5 418.8 141.3 417.0 143.1 415.1 144.9 449.9 146.7 448.0 148.5 446.2 150.3 444.4 152.1 442.5 153.9 440.7 155.7 438.9 157.5 437.1 159.3 435.2 161.1 433.4 162.8 431.6 164.6 429.8 166.4 427.9 168.2 426.1 170.0 424.3 171.8 422.5 173.6 420.6 175.4 418.8 177.2 417.0 179.0 415.1 180.8 449.9 182.6 448.0 184.4 446.2 186.2 444.4 188.0 442.5 189.8 440.7 191.6 438.9 193.4 437.1 195.2 435.2 197.0 433.4 198.8 431.6 200.6 429.8 202.4 427.9 204.2 426.1 206.0 424.3 207.8 422.5 209.6 420.6 211.4 418.8 213.2 417.0 215.0 415.1 216.8 449.9 218.6 448.0 220.4 446.2 222.2 444.4 223.9 442.5 225.7 440.7 227.5 438.9 229.3 437.1 231.1 435.2 232.9 433.4 234.7 431.6 236.5 429.8 238.3 427.9 240.1 426.1 241.9 424.3 243.7 422.5 245.5 420.6 247.3 418.8 249.1 417.0 250.9 415.1 252.7 449.9 254.5 448.0 256.3 446.2 258.1 444.4 259.9 442.5 261.7 440.7 263.5 438.9 265.3 437.1 267.1 435.2 268.9 433.4 270.7 431.6 272.5 429.8 274.3 427.9 276.1 426.1 277.9 424.3 279.7 422.5 281.5 420.6 283.2 418.8 285.0 417.0 286.8 415.1 288.6 449.9 290.4 448.0 292.2 446.2 294.0 444.4 295.8 442.5 297.6 440.7 299.4 438.9 301.2 437.1 303.0 435.2 304.8 433.4 306.6 431.6 308.4 429.8 310.2 427.9 312.0 426.1 313.8 424.3 315.6 422.5 317.4 420.6 319.2 418.8 321.0 417.0 322.8 415.1 324.6 449.9 326.4 448.0 328.2 446.2 330.0 444.4 331.8 442.5 333.6 440.7 335.4 438.9 337.2 437.1 339.0 435.2 340.8 433.4 342.6 431.6 344.3 429.8 346.1 427.9 347.9 426.1 349.7 424.3 351.5 422.5 353.3 420.6 355.1 418.8 356.9 417.0 358.7 415.1 360.5 449.9 362.3 448.0 364.1 446.2 365.9 444.4 367.7 442.5 369.5 440.7 371.3 438.9 373.1 437.1 374.9 435.2 376.7 433.4 378.5 431.6 380.3 429.8 382.1 427.9 383.9 426.1 385.7 424.3 387.5 422.5 389.3 420.6 391.1 418.8 392.9 417.0 394.7 415.1 396.5 449.9 398.3 448.0 400.1 446.2 401.9 444.4 403.6 442.5 405.4 440.7 407.2 438.9 409.0 437.1 410.8 435.2 412.6 433.4 414.4 431.6 416.2 429.8 418.0 427.9 419.8 426.1 421.6 424.3 423.4 422.5 425.2 420.6 427.0 418.8 428.8 417.0 430.6 415.1 432.4 449.9 434.2 448.0 436.0 446.2 437.8 444.4 439.6 442.5 441.4 440.7 443.2 438.9 445.0 437.1 446.8 435.2 448.6 433.4 450.4 431.6 452.2 429.8 454.0 427.9 455.8 426.1 457.6 424.3 459.4 422.5 461.2 420.6 462.9 418.8 464.7 417.0 466.5 415.1 468.3 449.9 470.1 448.0 471.9 446.2 473.7 444.4 475.5 442.5 477.3 440.7 479.1 438.9 480.9 437.1 482.7 435.2 484.5 433.4 486.3 431.6 488.1 429.8 489.9 427.9 491.7 426.1 493.5 424.3 495.3 422.5 497.1 420.6 498.9 418.8 500.7 417.0 502.5 415.1 504.3 449.9 506.1 448.0 507.9 446.2 509.7 444.4 511.5 442.5 513.3 440.7 515.1 438.9 516.9 437.1 518.7 435.2 520.5 433.4 522.2 431.6 524.0 429.8 525.8 427.9 527.6 426.1 529.4 424.3 531.2 422.5 533.0 420.6 534.8 418.8 536.6 417.0 538.4 415.1 540.2 449.9 542.0 448.0 543.8 446.2 545.6 444.4 547.4 442.5 549.2 440.7 551.0 438.9 552.8 437.1 554.6 435.2 556.4 433.4 558.2 431.6 560.0 429.8 561.8 427.9 563.6 426.1 565.4 424.3 567.2 422.5 569.0 420.6 570.8 418.8 572.6 417.0 574.4 415.1 576.2 449.9 578.0 448.0 579.8 446.2 581.6 444.4 583.3 442.5 585.1 440.7 586.9 438.9 588.7 437.1 590.5 435.2 592.3 433.4 594.1 431.6 595.9 429.8 597.7 427.9 599.5 426.1 601.3 424.3 603.1 422.5 604.9 420.6 606.7 418.8 608.5 417.0 610.3 415.1 612.1 449.9 613.9 448.0 615.7 446.2 617.5 444.4 619.3 442.5 621.1 440.7 622.9 438.9 624.7 437.1 626.5 435.2 628.3 433.4 630.1 431.6 631.9 429.8 633.7 427.9 635.5 426.1 637.3 424.3 639.1 422.5 640.9 420.6 642.6 418.8 644.4 417.0 646.2 415.1 648.0 449.9 649.8 448.0 651.6 446.2 653.4 444.4 655.2 442.5 657.0 440.7 658.8 438.9 660.6 437.1 662.4 435.2 664.2 433.4 666.0 431.6 667.8 429.8 669.6 427.9 671.4 426.1 673.2 424.3 675.0 422.5 676.8 420.6 678.6 418.8 680.4 417.0 682.2 415.1 684.0 449.9 685.8 448.0 687.6 446.2 689.4 444.4 691.2 442.5 693.0 440.7 694.8 438.9 696.6 437.1 698.4 435.2 700.2 433.4 701.9 431.6 703.7 429.8 705.5 427.9 707.3 426.1 709.1 424.3 710.9 422.5 712.7 420.6 714.5 418.8 716.3 417.0 718.1 415.1 719.9 449.9 721.7 448.0 723.5 446.2 725.3 444.4 727.1 442.5 728.9 440.7 730.7 438.9 732.5 437.1 734.3 435.2 736.1 433.4 737.9 431.6 739.7 429.8 741.5 427.9 743.3 426.1 745.1 424.3 746.9 422.5 748.7 420.6 750.5 418.8 752.3 417.0 754.1 415.1 755.9 449.9 757.7 448.0 759.5 446.2 761.3 444.4 763.0 442.5 764.8 440.7 766.6 438.9 768.4 437.1 770.2 435.2 772.0 433.4 773.8 431.6 775.6 429.8 777.4 427.9 779.2 426.1 781.0 424.3 782.8 422.5 784.6 420.6 786.4 418.8 788.2 417.0 790.0 415.1" fill="none" stroke="#78c066" stroke-width="1"/>
<path d="M448.2 411.3V454.3" stroke="#a8a848"/>
</svg>
</body></html>
